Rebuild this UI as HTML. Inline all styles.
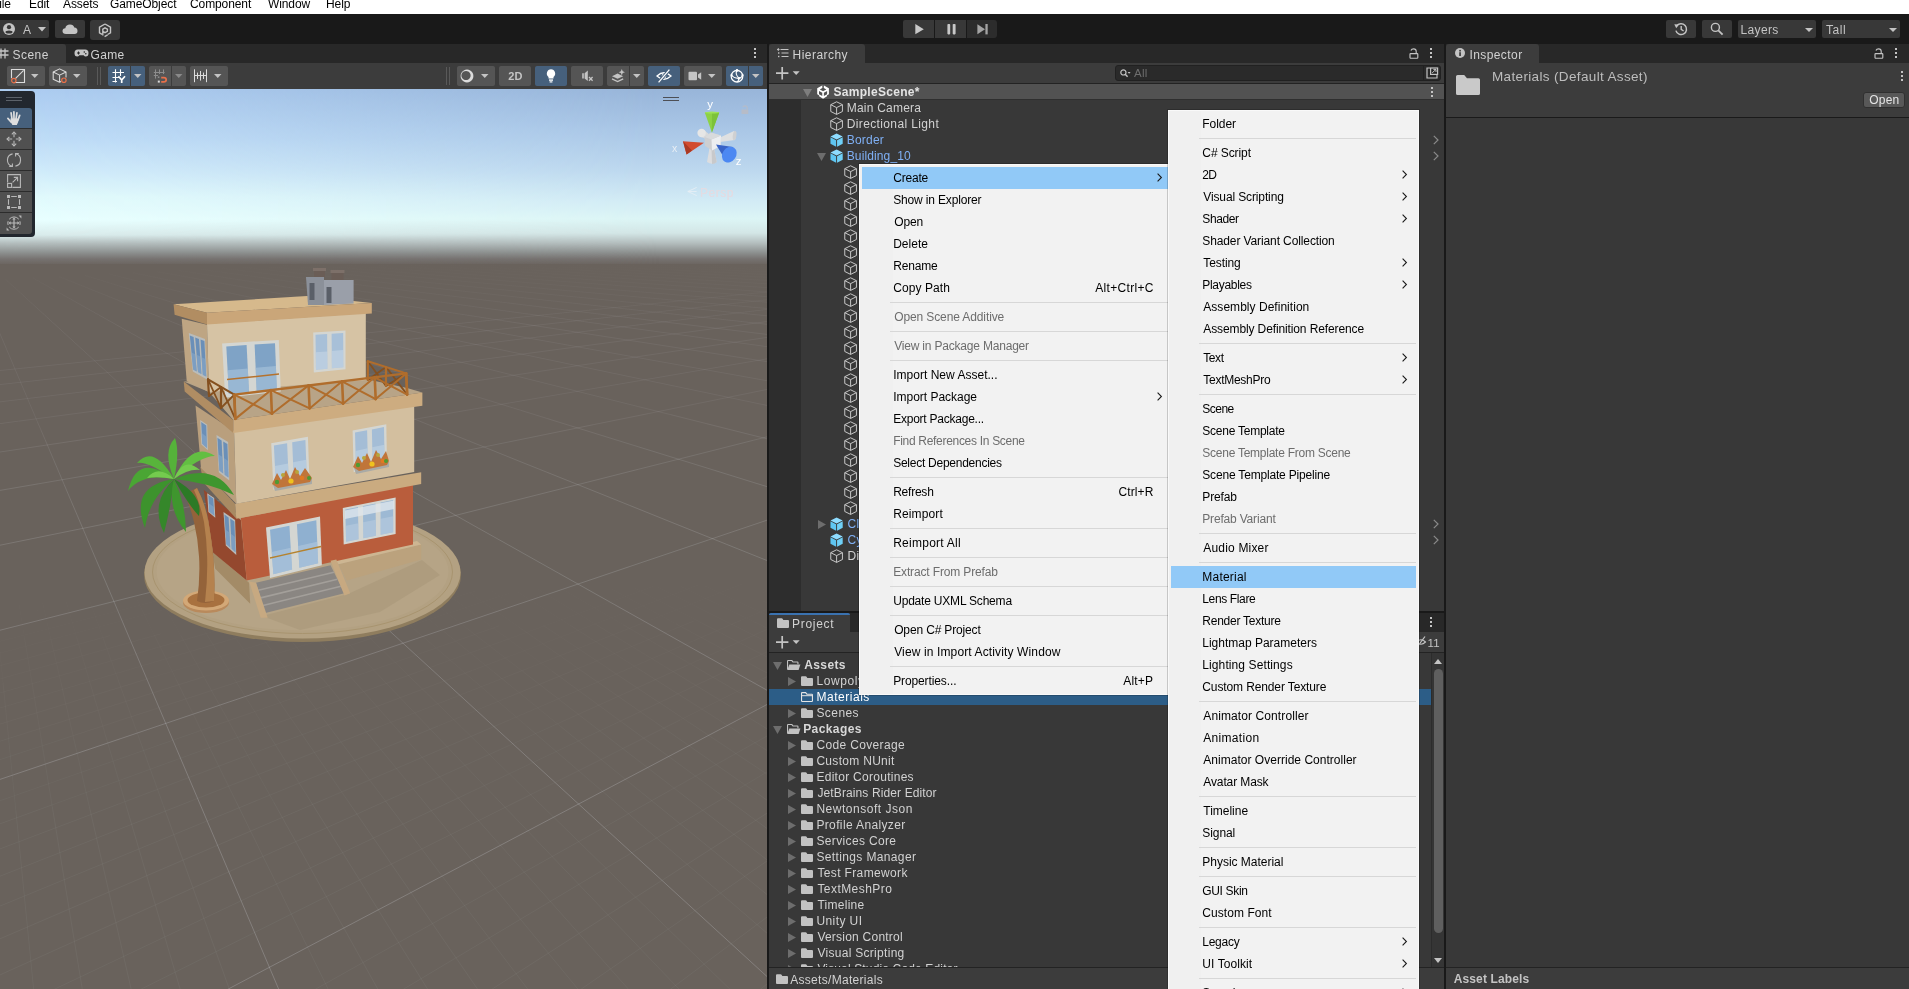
<!DOCTYPE html><html><head><meta charset="utf-8"><title>Unity</title><style>
*{box-sizing:border-box;margin:0;padding:0}
html,body{width:1909px;height:989px;overflow:hidden;background:#191919;font-family:"Liberation Sans",sans-serif;font-size:12px;color:#d2d2d2}
.a{position:absolute}
.t{position:absolute;white-space:pre;line-height:16px;height:16px}
.u{letter-spacing:0.25px}
.b{font-weight:bold}
svg{position:absolute;overflow:visible}
.btn{position:absolute;background:#383838;border-radius:2px}
.tb{position:absolute;background:#555555;border-radius:2px}
.tbon{position:absolute;background:#46607c;border-radius:2px}
.mi{position:absolute;white-space:pre;line-height:22px;height:22px;color:#000;font-size:12px;letter-spacing:-0.1px}
.mi.d{color:#6d6d6d}
.sep{position:absolute;height:1px;background:#d7d7d7}
</style></head><body><div id="root" style="position:absolute;left:0;top:0;width:1909px;height:989px;overflow:hidden;will-change:transform">
<div class="a" style="left:0px;top:0px;width:1909px;height:14px;background:#ffffff;"></div>
<div class="t " style="left:-8px;top:-4px;color:#000;letter-spacing:-0.1px">File</div>
<div class="t " style="left:29px;top:-4px;color:#000;letter-spacing:-0.1px">Edit</div>
<div class="t " style="left:63px;top:-4px;color:#000;letter-spacing:-0.1px">Assets</div>
<div class="t " style="left:110px;top:-4px;color:#000;letter-spacing:-0.1px">GameObject</div>
<div class="t " style="left:190px;top:-4px;color:#000;letter-spacing:-0.1px">Component</div>
<div class="t " style="left:268px;top:-4px;color:#000;letter-spacing:-0.1px">Window</div>
<div class="t " style="left:326px;top:-4px;color:#000;letter-spacing:-0.1px">Help</div>
<div class="a" style="left:0px;top:14px;width:1909px;height:30px;background:#191919;"></div>
<div class="btn" style="left:-3px;top:20px;width:52px;height:18px"></div>
<div class="btn" style="left:55px;top:20px;width:30px;height:18px"></div>
<div class="btn" style="left:90px;top:20px;width:30px;height:20px;border-radius:3px"></div>
<svg style="left:3px;top:23px" width="12" height="12" viewBox="0 0 12 12"><circle cx="6" cy="6" r="6" fill="#c4c4c4"/><circle cx="6" cy="4.2" r="2.1" fill="#383838"/><ellipse cx="6" cy="9" rx="3.5" ry="1.5" fill="#383838"/></svg>
<div class="t " style="left:23px;top:21.5px;color:#c4c4c4">A</div>
<svg style="left:38.0px;top:26.900000000000002px" width="8" height="4.4" viewBox="0 0 8 4.4"><path d="M0 0H8L4.0 4.4Z" fill="#c4c4c4"/></svg>
<svg style="left:62px;top:24px" width="16" height="10" viewBox="0 0 16 10"><path d="M4 10Q0.5 10 0.5 7Q0.5 4.5 3.3 4.2Q4 0.5 8 0.5Q11.5 0.5 12.3 3.6Q15.5 3.8 15.5 7Q15.5 10 12.5 10Z" fill="#c4c4c4"/></svg>
<svg style="left:98px;top:23px" width="14" height="14" viewBox="0 0 14 14"><path d="M7 1L12.5 4.2V9.8L9.6 11.5" fill="none" stroke="#c4c4c4" stroke-width="1.4"/><path d="M7 1L1.5 4.2V9.8L4 11.3" fill="none" stroke="#c4c4c4" stroke-width="1.4"/><path d="M4.8 12.4V6.2L7 4.9L9.4 6.2V8.3L7 9.6L5.2 8.6" fill="none" stroke="#c4c4c4" stroke-width="1.4"/><path d="M6.6 13.6L9.6 11.8" stroke="#c4c4c4" stroke-width="1.4"/></svg>
<div class="a" style="left:903px;top:20px;width:31px;height:18px;background:#383838;border-radius:2px 0 0 2px"></div>
<div class="a" style="left:935px;top:20px;width:31px;height:18px;background:#383838;"></div>
<div class="a" style="left:967px;top:20px;width:30px;height:18px;background:#2c2c2c;border-radius:0 3px 3px 0"></div>
<svg style="left:914.5px;top:23.9px" width="10" height="10.4" viewBox="0 0 10 10.4"><path d="M0.3 0.1V10.3L8.8 5.2Z" fill="#c8c8c8"/></svg>
<svg style="left:946.5px;top:23.9px" width="9" height="10.4" viewBox="0 0 9 10.4"><rect x="0.4" y="0" width="2.8" height="10.4" rx="0.8" fill="#c8c8c8"/><rect x="5.7" y="0" width="2.9" height="10.4" rx="0.8" fill="#c8c8c8"/></svg>
<svg style="left:976.5px;top:24px" width="11" height="10.4" viewBox="0 0 11 10.4"><path d="M0.4 0.2V10.2L8 5.2Z" fill="#a4a4a4"/><rect x="8.4" y="0" width="2.3" height="10.4" fill="#a4a4a4"/></svg>
<div class="btn" style="left:1666px;top:20px;width:30px;height:18px"></div>
<div class="btn" style="left:1702px;top:20px;width:30px;height:18px"></div>
<div class="btn" style="left:1738px;top:20px;width:78px;height:18px"></div>
<div class="btn" style="left:1822px;top:20px;width:78px;height:18px"></div>
<svg style="left:1674px;top:22px" width="14" height="14" viewBox="0 0 14 14"><path d="M2.6 4.2A5.4 5.4 0 1 1 1.9 8.6" fill="none" stroke="#c4c4c4" stroke-width="1.5"/><path d="M0.3 2.2L4.9 2.6L2.2 6.2Z" fill="#c4c4c4"/><path d="M7.2 4V7.4L9.6 9" fill="none" stroke="#c4c4c4" stroke-width="1.4"/></svg>
<svg style="left:1710px;top:22px" width="14" height="14" viewBox="0 0 14 14"><circle cx="5.4" cy="5.4" r="4" fill="none" stroke="#c4c4c4" stroke-width="1.4"/><path d="M8.3 8.3L12.6 12.6" stroke="#c4c4c4" stroke-width="1.8"/></svg>
<div class="t " style="left:1740.4px;top:21.5px;letter-spacing:0.38px;font-size:12px;color:#c4c4c4">Layers</div>
<svg style="left:1804.5px;top:27.5px" width="8" height="4" viewBox="0 0 8 4"><path d="M0 0H8L4.0 4Z" fill="#c4c4c4"/></svg>
<div class="t " style="left:1825.9px;top:21.5px;letter-spacing:0.567px;font-size:12px;color:#c4c4c4">Tall</div>
<svg style="left:1888.5px;top:27.5px" width="8" height="4" viewBox="0 0 8 4"><path d="M0 0H8L4.0 4Z" fill="#c4c4c4"/></svg>
<div class="a" style="left:0px;top:44px;width:767px;height:19px;background:#282828;"></div>
<div class="a" style="left:0px;top:44px;width:66px;height:20px;background:#3c3c3c;border-radius:0 3px 0 0"></div>
<svg style="left:-2px;top:48px" width="11" height="11" viewBox="0 0 11 11"><path d="M3 0.5V10.5M7 0.5V10.5M0 3H10.5M0 7H10.5" stroke="#c4c4c4" stroke-width="1.3" fill="none"/></svg>
<div class="t " style="left:12.6px;top:47px;letter-spacing:0.425px;font-size:12px;">Scene</div>
<svg style="left:74px;top:49px" width="15" height="9" viewBox="0 0 15 9"><path d="M3.8 0.5H11.2Q14.5 0.5 14.5 4Q14.5 7.5 11.8 7.5Q10.5 7.5 9.6 6.3H5.4Q4.5 7.5 3.2 7.5Q0.5 7.5 0.5 4Q0.5 0.5 3.8 0.5Z" fill="#c4c4c4"/><path d="M3 4H6M4.5 2.5V5.5" stroke="#282828" stroke-width="1"/><circle cx="10.3" cy="3" r="0.8" fill="#282828"/><circle cx="11.8" cy="4.8" r="0.8" fill="#282828"/></svg>
<div class="t " style="left:90.6px;top:47px;letter-spacing:0.333px;font-size:12px;">Game</div>
<svg style="left:753.5px;top:48px" width="2" height="10" viewBox="0 0 2 10"><rect x="0" y="0" width="2" height="2" fill="#c4c4c4"/><rect x="0" y="4" width="2" height="2" fill="#c4c4c4"/><rect x="0" y="8" width="2" height="2" fill="#c4c4c4"/></svg>
<div class="a" style="left:0px;top:63px;width:767px;height:26px;background:#3c3c3c;"></div>
<div class="tb" style="left:7px;top:66px;width:38px;height:20px"></div>
<div class="tb" style="left:49px;top:66px;width:38px;height:20px"></div>
<div class="a" style="left:97px;top:67px;width:1px;height:18px;background:#595959;"></div>
<div class="a" style="left:100px;top:67px;width:1px;height:18px;background:#595959;"></div>
<div class="tbon" style="left:108px;top:66px;width:37px;height:20px"></div><div class="a" style="left:130px;top:66px;width:1px;height:20px;background:#3c3c3c;"></div>
<div class="tb" style="left:149px;top:66px;width:37px;height:20px"></div><div class="a" style="left:171px;top:66px;width:1px;height:20px;background:#3c3c3c;"></div>
<div class="tb" style="left:190px;top:66px;width:38px;height:20px"></div>
<div class="a" style="left:446px;top:67px;width:1px;height:18px;background:#595959;"></div>
<div class="a" style="left:449px;top:67px;width:1px;height:18px;background:#595959;"></div>
<div class="tb" style="left:457px;top:66px;width:38px;height:20px"></div>
<div class="tb" style="left:499px;top:66px;width:32px;height:20px"></div>
<div class="tbon" style="left:535px;top:66px;width:32px;height:20px"></div>
<div class="tb" style="left:571px;top:66px;width:32px;height:20px"></div>
<div class="tb" style="left:607px;top:66px;width:37px;height:20px"></div><div class="a" style="left:629px;top:66px;width:1px;height:20px;background:#3c3c3c;"></div>
<div class="tbon" style="left:648px;top:66px;width:32px;height:20px"></div>
<div class="tb" style="left:684px;top:66px;width:38px;height:20px"></div>
<div class="tbon" style="left:726px;top:66px;width:37px;height:20px"></div><div class="a" style="left:748px;top:66px;width:1px;height:20px;background:#3c3c3c;"></div>
<svg style="left:10px;top:68px" width="16" height="16" viewBox="0 0 16 16"><path d="M4.4 14.5H14.5V1.5H1.5V10.2" fill="none" stroke="#dcdcdc" stroke-width="1.1"/><path d="M5.4 10.6L13.6 2.4" stroke="#dcdcdc" stroke-width="1.1"/><circle cx="3.8" cy="12.6" r="2.2" fill="none" stroke="#e8704a" stroke-width="1.2"/></svg>
<svg style="left:31.25px;top:74.3px" width="7.5" height="4" viewBox="0 0 7.5 4"><path d="M0 0H7.5L3.75 4Z" fill="#c4c4c4"/></svg>
<svg style="left:52px;top:68px" width="16" height="16" viewBox="0 0 16 16"><path d="M9.2 13.6L7.6 14.3L1.2 11.2V4L7.6 0.9L14 4V9.6M1.2 4L7.6 7.1L14 4M7.6 7.1V14.3" fill="none" stroke="#dcdcdc" stroke-width="1.05" stroke-linejoin="round"/><circle cx="11.9" cy="12.2" r="2.2" fill="none" stroke="#e8704a" stroke-width="1.2"/></svg>
<svg style="left:73.25px;top:74.3px" width="7.5" height="4" viewBox="0 0 7.5 4"><path d="M0 0H7.5L3.75 4Z" fill="#c4c4c4"/></svg>
<svg style="left:112px;top:68px" width="15" height="16" viewBox="0 0 15 16"><path d="M0.5 4.5H12M0.5 9.5H7.4M0.5 13.5H5M3.5 1.2V14.6M8.5 1.2V8" stroke="#fff" stroke-width="1.1" fill="none"/><path d="M6.4 8.2L9.7 12V15M13 8.2L9.7 12" stroke="#fff" stroke-width="1.7" fill="none"/></svg>
<svg style="left:134.25px;top:74.3px" width="7.5" height="4" viewBox="0 0 7.5 4"><path d="M0 0H7.5L3.75 4Z" fill="#c4c4c4"/></svg>
<svg style="left:153px;top:68px" width="15" height="16" viewBox="0 0 15 16"><path d="M0.8 4.5H11.6M0.8 7.5H5M2.5 1.4V10.6M6.5 1.4V6M10.5 1.4V6" stroke="#8c8c8c" stroke-width="1" fill="none"/><rect x="4.8" y="12.6" width="2" height="2" fill="#dcdcdc"/><rect x="4.8" y="8.4" width="1.6" height="1.6" fill="#8c8c8c"/><path d="M8.2 9.6H10.8Q13.2 9.6 13.2 11.7Q13.2 13.8 10.8 13.8H8.2" stroke="#e8704a" stroke-width="1.7" fill="none"/></svg>
<svg style="left:175.25px;top:74.3px" width="7.5" height="4" viewBox="0 0 7.5 4"><path d="M0 0H7.5L3.75 4Z" fill="#8a8a8a"/></svg>
<svg style="left:194px;top:69px" width="14" height="14" viewBox="0 0 14 14"><path d="M0.5 0.3V13.2M12.5 0.3V13.2M3.5 3.6V10M6.5 2V11.6M9.5 3.6V10M0.5 6.5H12.5" stroke="#dcdcdc" stroke-width="1" fill="none"/></svg>
<svg style="left:214.25px;top:74.3px" width="7.5" height="4" viewBox="0 0 7.5 4"><path d="M0 0H7.5L3.75 4Z" fill="#c4c4c4"/></svg>
<svg style="left:460px;top:69px" width="14" height="14" viewBox="0 0 14 14"><path fill-rule="evenodd" d="M7 0.6A6.4 6.4 0 1 1 6.99 0.6ZM6 1.9A4.6 4.6 0 1 0 6.01 1.9Z" fill="#dcdcdc"/></svg>
<svg style="left:481.25px;top:74.3px" width="7.5" height="4" viewBox="0 0 7.5 4"><path d="M0 0H7.5L3.75 4Z" fill="#c4c4c4"/></svg>
<div class="t b" style="left:508.2px;top:67.5px;color:#c4c4c4;font-size:11px;letter-spacing:0.2px">2D</div>
<svg style="left:546px;top:69px" width="10" height="14" viewBox="0 0 10 14"><path d="M5 0.3A4.3 4.3 0 0 1 7.5 8V9.6H2.5V8A4.3 4.3 0 0 1 5 0.3Z" fill="#fff"/><rect x="3" y="10.4" width="4" height="1.4" fill="#fff"/><rect x="3.6" y="12.3" width="2.8" height="1.2" fill="#fff"/></svg>
<svg style="left:581px;top:70px" width="13" height="12" viewBox="0 0 13 12"><path d="M1.2 3.2H2.8V8.4H1.2Z" fill="#c4c4c4"/><path d="M3.6 3.2L6.8 0.6V11L3.6 8.4Z" fill="#c4c4c4"/><path d="M8 7L11.6 10.8M11.6 7L8 10.8" stroke="#c4c4c4" stroke-width="1.3"/></svg>
<svg style="left:611px;top:69px" width="15" height="14" viewBox="0 0 15 14"><path d="M1 7.2L6.6 4.6L12.2 7.2L6.6 9.8Z" fill="#c4c4c4"/><path d="M1 9.8L6.6 12.6L12.2 9.8" fill="none" stroke="#c4c4c4" stroke-width="1.3"/><path d="M10.8 0L11.7 2.3L14 3.2L11.7 4.1L10.8 6.4L9.9 4.1L7.6 3.2L9.9 2.3Z" fill="#c4c4c4"/></svg>
<svg style="left:633.25px;top:74.3px" width="7.5" height="4" viewBox="0 0 7.5 4"><path d="M0 0H7.5L3.75 4Z" fill="#c4c4c4"/></svg>
<svg style="left:656px;top:69px" width="16" height="14" viewBox="0 0 16 14"><path d="M1 7Q8 0.5 15 7Q8 13.5 1 7Z" fill="none" stroke="#fff" stroke-width="1.3"/><circle cx="8" cy="7" r="2.3" fill="#fff"/><path d="M3 13L13 1" stroke="#46607c" stroke-width="3.2"/><path d="M2.6 13.4L13.4 0.6" stroke="#fff" stroke-width="1.3"/></svg>
<svg style="left:688px;top:71px" width="14" height="10" viewBox="0 0 14 10"><rect x="0.5" y="0.8" width="8.5" height="8.4" rx="1" fill="#c4c4c4"/><path d="M10 3.6L13.2 1.2V8.8L10 6.4Z" fill="#c4c4c4"/></svg>
<svg style="left:708.25px;top:74.3px" width="7.5" height="4" viewBox="0 0 7.5 4"><path d="M0 0H7.5L3.75 4Z" fill="#c4c4c4"/></svg>
<svg style="left:730px;top:69px" width="14" height="14" viewBox="0 0 14 14"><circle cx="7" cy="7.2" r="5.8" fill="none" stroke="#fff" stroke-width="1.3"/><path d="M1.4 6Q4 9.6 9 9.2Q12 8.6 12.6 6M7 1.4Q4.6 5 9 9.2Q8.6 11.6 7.4 13" fill="none" stroke="#fff" stroke-width="1.1"/><circle cx="7" cy="1.4" r="1.3" fill="#fff"/><circle cx="9" cy="9.2" r="1.3" fill="#fff"/><circle cx="1.6" cy="6.2" r="1.1" fill="#fff"/><circle cx="12.5" cy="6.2" r="1.1" fill="#fff"/></svg>
<svg style="left:752.25px;top:74.3px" width="7.5" height="4" viewBox="0 0 7.5 4"><path d="M0 0H7.5L3.75 4Z" fill="#c4c4c4"/></svg>
<div class="a" style="left:0;top:89px;width:767px;height:900px;overflow:hidden;background:#69625c">
<div class="a" style="left:0;top:0;width:767px;height:176px;background:linear-gradient(to bottom,#98b5d9 0px,#a9c6e6 40px,#bcd7ee 80px,#d2ebf5 112px,#dcf5f5 130px,#d3e6e6 144px,#b4bebe 154px,#8f9392 163px,#767270 170px,#69625c 177px)"></div>
<div class="a" style="left:0;top:0;width:767px;height:176px;background:linear-gradient(to bottom,#acccf0 0px,#bedcf7 49px,#d0ebfa 82px,#e1fafc 108px,#e8ffff 131px,#d9ebeb 146px,#b4bebe 154px,#8f9392 163px,#767270 170px,#69625c 177px);-webkit-mask-image:linear-gradient(to right,#000 0,rgba(0,0,0,.85) 150px,transparent 660px);mask-image:linear-gradient(to right,#000 0,rgba(0,0,0,.85) 150px,transparent 660px)"></div>
<svg style="left:0;top:-89px" width="767" height="989" viewBox="0 0 767 989"><line x1="-283.9" y1="293.5" x2="-299.5" y2="297.2" stroke="#eef6ff" stroke-width="0.85" stroke-opacity="0.07"/><line x1="-292.7" y1="400.5" x2="1034.2" y2="264.6" stroke="#eef6ff" stroke-width="0.85" stroke-opacity="0.07"/><line x1="-247.1" y1="291.7" x2="-300.0" y2="306.0" stroke="#eef6ff" stroke-width="0.85" stroke-opacity="0.07"/><line x1="-293.2" y1="417.0" x2="1076.6" y2="265.5" stroke="#eef6ff" stroke-width="0.85" stroke-opacity="0.07"/><line x1="-211.6" y1="289.9" x2="-299.8" y2="317.8" stroke="#eef6ff" stroke-width="0.85" stroke-opacity="0.07"/><line x1="-293.7" y1="437.2" x2="-210.2" y2="427.2" stroke="#eef6ff" stroke-width="0.85" stroke-opacity="0.08"/><line x1="-210.2" y1="427.2" x2="1099.6" y2="269.3" stroke="#eef6ff" stroke-width="0.85" stroke-opacity="0.07"/><line x1="-177.3" y1="288.2" x2="-299.4" y2="334.9" stroke="#eef6ff" stroke-width="0.85" stroke-opacity="0.07"/><line x1="-294.5" y1="462.8" x2="-234.7" y2="454.9" stroke="#eef6ff" stroke-width="0.85" stroke-opacity="0.11"/><line x1="-234.7" y1="454.9" x2="-135.5" y2="441.7" stroke="#eef6ff" stroke-width="0.85" stroke-opacity="0.10"/><line x1="-135.5" y1="441.7" x2="-55.3" y2="431.0" stroke="#eef6ff" stroke-width="0.85" stroke-opacity="0.09"/><line x1="-55.3" y1="431.0" x2="18.3" y2="421.2" stroke="#eef6ff" stroke-width="0.85" stroke-opacity="0.08"/><line x1="18.3" y1="421.2" x2="1099.8" y2="277.3" stroke="#eef6ff" stroke-width="0.85" stroke-opacity="0.07"/><line x1="-144.2" y1="286.6" x2="-298.9" y2="362.3" stroke="#eef6ff" stroke-width="0.85" stroke-opacity="0.07"/><line x1="-295.4" y1="496.1" x2="-267.4" y2="491.9" stroke="#eef6ff" stroke-width="0.85" stroke-opacity="0.14"/><line x1="-267.4" y1="491.9" x2="-150.5" y2="474.5" stroke="#eef6ff" stroke-width="0.85" stroke-opacity="0.13"/><line x1="-150.5" y1="474.5" x2="-57.4" y2="460.6" stroke="#eef6ff" stroke-width="0.85" stroke-opacity="0.12"/><line x1="-57.4" y1="460.6" x2="26.9" y2="448.0" stroke="#eef6ff" stroke-width="0.85" stroke-opacity="0.11"/><line x1="26.9" y1="448.0" x2="103.7" y2="436.5" stroke="#eef6ff" stroke-width="0.85" stroke-opacity="0.10"/><line x1="103.7" y1="436.5" x2="173.8" y2="426.0" stroke="#eef6ff" stroke-width="0.85" stroke-opacity="0.09"/><line x1="173.8" y1="426.0" x2="245.9" y2="415.2" stroke="#eef6ff" stroke-width="0.85" stroke-opacity="0.08"/><line x1="245.9" y1="415.2" x2="1100.0" y2="287.7" stroke="#eef6ff" stroke-width="0.85" stroke-opacity="0.07"/><line x1="-112.3" y1="285.0" x2="-297.9" y2="412.7" stroke="#eef6ff" stroke-width="0.85" stroke-opacity="0.07"/><line x1="-296.7" y1="541.2" x2="-171.2" y2="519.7" stroke="#eef6ff" stroke-width="0.85" stroke-opacity="0.16"/><line x1="-171.2" y1="519.7" x2="-60.2" y2="500.7" stroke="#eef6ff" stroke-width="0.85" stroke-opacity="0.15"/><line x1="-60.2" y1="500.7" x2="38.5" y2="483.8" stroke="#eef6ff" stroke-width="0.85" stroke-opacity="0.14"/><line x1="38.5" y1="483.8" x2="126.9" y2="468.6" stroke="#eef6ff" stroke-width="0.85" stroke-opacity="0.13"/><line x1="126.9" y1="468.6" x2="206.6" y2="454.9" stroke="#eef6ff" stroke-width="0.85" stroke-opacity="0.12"/><line x1="206.6" y1="454.9" x2="287.3" y2="441.1" stroke="#eef6ff" stroke-width="0.85" stroke-opacity="0.11"/><line x1="287.3" y1="441.1" x2="352.2" y2="430.0" stroke="#eef6ff" stroke-width="0.85" stroke-opacity="0.10"/><line x1="352.2" y1="430.0" x2="411.6" y2="419.8" stroke="#eef6ff" stroke-width="0.85" stroke-opacity="0.09"/><line x1="411.6" y1="419.8" x2="466.0" y2="410.4" stroke="#eef6ff" stroke-width="0.85" stroke-opacity="0.08"/><line x1="466.0" y1="410.4" x2="1098.6" y2="302.0" stroke="#eef6ff" stroke-width="0.85" stroke-opacity="0.07"/><line x1="-81.4" y1="283.4" x2="-204.3" y2="428.6" stroke="#eef6ff" stroke-width="0.85" stroke-opacity="0.07"/><line x1="-204.3" y1="428.6" x2="-210.5" y2="435.9" stroke="#eef6ff" stroke-width="0.85" stroke-opacity="0.08"/><line x1="-210.5" y1="435.9" x2="-219.0" y2="445.9" stroke="#eef6ff" stroke-width="0.85" stroke-opacity="0.09"/><line x1="-219.0" y1="445.9" x2="-228.4" y2="457.0" stroke="#eef6ff" stroke-width="0.85" stroke-opacity="0.10"/><line x1="-228.4" y1="457.0" x2="-236.7" y2="466.8" stroke="#eef6ff" stroke-width="0.85" stroke-opacity="0.11"/><line x1="-236.7" y1="466.8" x2="-248.1" y2="480.2" stroke="#eef6ff" stroke-width="0.85" stroke-opacity="0.12"/><line x1="-248.1" y1="480.2" x2="-258.2" y2="492.2" stroke="#eef6ff" stroke-width="0.85" stroke-opacity="0.13"/><line x1="-258.2" y1="492.2" x2="-272.3" y2="508.9" stroke="#eef6ff" stroke-width="0.85" stroke-opacity="0.14"/><line x1="-272.3" y1="508.9" x2="-288.5" y2="528.0" stroke="#eef6ff" stroke-width="0.85" stroke-opacity="0.15"/><line x1="-288.5" y1="528.0" x2="-299.3" y2="540.7" stroke="#eef6ff" stroke-width="0.85" stroke-opacity="0.16"/><line x1="-298.5" y1="605.9" x2="-201.6" y2="586.2" stroke="#eef6ff" stroke-width="0.85" stroke-opacity="0.19"/><line x1="-201.6" y1="586.2" x2="-64.3" y2="558.3" stroke="#eef6ff" stroke-width="0.85" stroke-opacity="0.18"/><line x1="-64.3" y1="558.3" x2="54.7" y2="534.1" stroke="#eef6ff" stroke-width="0.85" stroke-opacity="0.17"/><line x1="54.7" y1="534.1" x2="159.1" y2="512.9" stroke="#eef6ff" stroke-width="0.85" stroke-opacity="0.16"/><line x1="159.1" y1="512.9" x2="251.2" y2="494.2" stroke="#eef6ff" stroke-width="0.85" stroke-opacity="0.15"/><line x1="251.2" y1="494.2" x2="342.8" y2="475.6" stroke="#eef6ff" stroke-width="0.85" stroke-opacity="0.14"/><line x1="342.8" y1="475.6" x2="415.2" y2="460.9" stroke="#eef6ff" stroke-width="0.85" stroke-opacity="0.13"/><line x1="415.2" y1="460.9" x2="480.4" y2="447.7" stroke="#eef6ff" stroke-width="0.85" stroke-opacity="0.12"/><line x1="480.4" y1="447.7" x2="539.5" y2="435.7" stroke="#eef6ff" stroke-width="0.85" stroke-opacity="0.11"/><line x1="539.5" y1="435.7" x2="593.3" y2="424.7" stroke="#eef6ff" stroke-width="0.85" stroke-opacity="0.10"/><line x1="593.3" y1="424.7" x2="648.4" y2="413.6" stroke="#eef6ff" stroke-width="0.85" stroke-opacity="0.09"/><line x1="648.4" y1="413.6" x2="693.0" y2="404.5" stroke="#eef6ff" stroke-width="0.85" stroke-opacity="0.08"/><line x1="693.0" y1="404.5" x2="1098.6" y2="322.1" stroke="#eef6ff" stroke-width="0.85" stroke-opacity="0.07"/><line x1="-296.0" y1="613.3" x2="-275.7" y2="609.1" stroke="#eef6ff" stroke-width="0.85" stroke-opacity="0.01"/><line x1="-298.3" y1="622.2" x2="-229.4" y2="607.6" stroke="#eef6ff" stroke-width="0.85" stroke-opacity="0.01"/><line x1="-288.4" y1="609.8" x2="-299.2" y2="626.2" stroke="#eef6ff" stroke-width="0.85" stroke-opacity="0.01"/><line x1="-296.5" y1="630.5" x2="-187.0" y2="606.9" stroke="#eef6ff" stroke-width="0.85" stroke-opacity="0.01"/><line x1="-264.9" y1="609.5" x2="-287.3" y2="646.9" stroke="#eef6ff" stroke-width="0.85" stroke-opacity="0.01"/><line x1="-287.3" y1="646.9" x2="-299.2" y2="666.7" stroke="#eef6ff" stroke-width="0.85" stroke-opacity="0.02"/><line x1="-299.0" y1="640.2" x2="-140.8" y2="605.4" stroke="#eef6ff" stroke-width="0.85" stroke-opacity="0.01"/><line x1="-241.4" y1="609.2" x2="-261.4" y2="646.5" stroke="#eef6ff" stroke-width="0.85" stroke-opacity="0.01"/><line x1="-261.4" y1="646.5" x2="-284.9" y2="690.2" stroke="#eef6ff" stroke-width="0.85" stroke-opacity="0.02"/><line x1="-284.9" y1="690.2" x2="-299.1" y2="716.8" stroke="#eef6ff" stroke-width="0.85" stroke-opacity="0.03"/><line x1="-297.1" y1="649.4" x2="-279.3" y2="645.3" stroke="#eef6ff" stroke-width="0.85" stroke-opacity="0.02"/><line x1="-279.3" y1="645.3" x2="-98.3" y2="604.7" stroke="#eef6ff" stroke-width="0.85" stroke-opacity="0.01"/><line x1="-217.9" y1="608.9" x2="-234.8" y2="644.6" stroke="#eef6ff" stroke-width="0.85" stroke-opacity="0.01"/><line x1="-234.8" y1="644.6" x2="-256.3" y2="689.9" stroke="#eef6ff" stroke-width="0.85" stroke-opacity="0.02"/><line x1="-256.3" y1="689.9" x2="-283.0" y2="746.4" stroke="#eef6ff" stroke-width="0.85" stroke-opacity="0.03"/><line x1="-283.0" y1="746.4" x2="-299.1" y2="780.4" stroke="#eef6ff" stroke-width="0.85" stroke-opacity="0.04"/><line x1="-299.7" y1="660.0" x2="-228.4" y2="643.6" stroke="#eef6ff" stroke-width="0.85" stroke-opacity="0.02"/><line x1="-228.4" y1="643.6" x2="-52.2" y2="603.2" stroke="#eef6ff" stroke-width="0.85" stroke-opacity="0.01"/><line x1="-194.3" y1="608.6" x2="-209.0" y2="644.3" stroke="#eef6ff" stroke-width="0.85" stroke-opacity="0.01"/><line x1="-209.0" y1="644.3" x2="-227.6" y2="689.6" stroke="#eef6ff" stroke-width="0.85" stroke-opacity="0.02"/><line x1="-227.6" y1="689.6" x2="-249.8" y2="743.7" stroke="#eef6ff" stroke-width="0.85" stroke-opacity="0.03"/><line x1="-249.8" y1="743.7" x2="-279.4" y2="815.7" stroke="#eef6ff" stroke-width="0.85" stroke-opacity="0.04"/><line x1="-279.4" y1="815.7" x2="-299.0" y2="863.5" stroke="#eef6ff" stroke-width="0.85" stroke-opacity="0.05"/><line x1="-297.7" y1="670.1" x2="-181.8" y2="642.9" stroke="#eef6ff" stroke-width="0.85" stroke-opacity="0.02"/><line x1="-181.8" y1="642.9" x2="-9.7" y2="602.5" stroke="#eef6ff" stroke-width="0.85" stroke-opacity="0.01"/><line x1="-170.3" y1="606.9" x2="-183.1" y2="644.0" stroke="#eef6ff" stroke-width="0.85" stroke-opacity="0.01"/><line x1="-183.1" y1="644.0" x2="-198.9" y2="689.2" stroke="#eef6ff" stroke-width="0.85" stroke-opacity="0.02"/><line x1="-198.9" y1="689.2" x2="-217.7" y2="743.4" stroke="#eef6ff" stroke-width="0.85" stroke-opacity="0.03"/><line x1="-217.7" y1="743.4" x2="-242.7" y2="815.4" stroke="#eef6ff" stroke-width="0.85" stroke-opacity="0.04"/><line x1="-242.7" y1="815.4" x2="-298.9" y2="977.2" stroke="#eef6ff" stroke-width="0.85" stroke-opacity="0.05"/><line x1="-295.7" y1="680.7" x2="-131.1" y2="641.2" stroke="#eef6ff" stroke-width="0.85" stroke-opacity="0.02"/><line x1="-131.1" y1="641.2" x2="36.3" y2="601.0" stroke="#eef6ff" stroke-width="0.85" stroke-opacity="0.01"/><line x1="-146.7" y1="606.6" x2="-157.2" y2="643.6" stroke="#eef6ff" stroke-width="0.85" stroke-opacity="0.01"/><line x1="-157.2" y1="643.6" x2="-169.6" y2="687.0" stroke="#eef6ff" stroke-width="0.85" stroke-opacity="0.02"/><line x1="-169.6" y1="687.0" x2="-185.5" y2="743.1" stroke="#eef6ff" stroke-width="0.85" stroke-opacity="0.03"/><line x1="-185.5" y1="743.1" x2="-206.0" y2="815.1" stroke="#eef6ff" stroke-width="0.85" stroke-opacity="0.04"/><line x1="-206.0" y1="815.1" x2="-298.8" y2="1141.7" stroke="#eef6ff" stroke-width="0.85" stroke-opacity="0.05"/><line x1="-298.4" y1="693.1" x2="-283.6" y2="689.5" stroke="#eef6ff" stroke-width="0.85" stroke-opacity="0.03"/><line x1="-283.6" y1="689.5" x2="-84.5" y2="640.5" stroke="#eef6ff" stroke-width="0.85" stroke-opacity="0.02"/><line x1="-84.5" y1="640.5" x2="79.0" y2="600.3" stroke="#eef6ff" stroke-width="0.85" stroke-opacity="0.01"/><line x1="-51.5" y1="281.9" x2="-83.1" y2="424.9" stroke="#eef6ff" stroke-width="0.85" stroke-opacity="0.07"/><line x1="-83.1" y1="424.9" x2="-85.1" y2="434.0" stroke="#eef6ff" stroke-width="0.85" stroke-opacity="0.08"/><line x1="-85.1" y1="434.0" x2="-86.8" y2="441.9" stroke="#eef6ff" stroke-width="0.85" stroke-opacity="0.09"/><line x1="-86.8" y1="441.9" x2="-89.2" y2="452.7" stroke="#eef6ff" stroke-width="0.85" stroke-opacity="0.10"/><line x1="-89.2" y1="452.7" x2="-91.9" y2="464.7" stroke="#eef6ff" stroke-width="0.85" stroke-opacity="0.11"/><line x1="-91.9" y1="464.7" x2="-94.2" y2="475.4" stroke="#eef6ff" stroke-width="0.85" stroke-opacity="0.12"/><line x1="-94.2" y1="475.4" x2="-97.5" y2="490.1" stroke="#eef6ff" stroke-width="0.85" stroke-opacity="0.13"/><line x1="-97.5" y1="490.1" x2="-100.4" y2="503.3" stroke="#eef6ff" stroke-width="0.85" stroke-opacity="0.14"/><line x1="-100.4" y1="503.3" x2="-104.5" y2="521.9" stroke="#eef6ff" stroke-width="0.85" stroke-opacity="0.15"/><line x1="-104.5" y1="521.9" x2="-109.2" y2="543.2" stroke="#eef6ff" stroke-width="0.85" stroke-opacity="0.16"/><line x1="-109.2" y1="543.2" x2="-113.5" y2="562.7" stroke="#eef6ff" stroke-width="0.85" stroke-opacity="0.17"/><line x1="-113.5" y1="562.7" x2="-119.7" y2="590.9" stroke="#eef6ff" stroke-width="0.85" stroke-opacity="0.18"/><line x1="-119.7" y1="590.9" x2="-125.5" y2="617.1" stroke="#eef6ff" stroke-width="0.85" stroke-opacity="0.19"/><line x1="-125.5" y1="617.1" x2="-134.1" y2="656.0" stroke="#eef6ff" stroke-width="0.85" stroke-opacity="0.20"/><line x1="-134.1" y1="656.0" x2="-144.6" y2="703.7" stroke="#eef6ff" stroke-width="0.85" stroke-opacity="0.21"/><line x1="-144.6" y1="703.7" x2="-155.0" y2="750.5" stroke="#eef6ff" stroke-width="0.85" stroke-opacity="0.22"/><line x1="-155.0" y1="750.5" x2="-171.2" y2="824.0" stroke="#eef6ff" stroke-width="0.85" stroke-opacity="0.23"/><line x1="-171.2" y1="824.0" x2="-268.6" y2="1265.1" stroke="#eef6ff" stroke-width="0.85" stroke-opacity="0.24"/><line x1="-275.7" y1="699.7" x2="-250.7" y2="693.4" stroke="#eef6ff" stroke-width="0.85" stroke-opacity="0.22"/><line x1="-250.7" y1="693.4" x2="-70.7" y2="648.1" stroke="#eef6ff" stroke-width="0.85" stroke-opacity="0.21"/><line x1="-70.7" y1="648.1" x2="79.3" y2="610.2" stroke="#eef6ff" stroke-width="0.85" stroke-opacity="0.20"/><line x1="79.3" y1="610.2" x2="206.4" y2="578.2" stroke="#eef6ff" stroke-width="0.85" stroke-opacity="0.19"/><line x1="206.4" y1="578.2" x2="315.3" y2="550.8" stroke="#eef6ff" stroke-width="0.85" stroke-opacity="0.18"/><line x1="315.3" y1="550.8" x2="420.7" y2="524.2" stroke="#eef6ff" stroke-width="0.85" stroke-opacity="0.17"/><line x1="420.7" y1="524.2" x2="502.1" y2="503.7" stroke="#eef6ff" stroke-width="0.85" stroke-opacity="0.16"/><line x1="502.1" y1="503.7" x2="574.0" y2="485.6" stroke="#eef6ff" stroke-width="0.85" stroke-opacity="0.15"/><line x1="574.0" y1="485.6" x2="637.9" y2="469.4" stroke="#eef6ff" stroke-width="0.85" stroke-opacity="0.14"/><line x1="637.9" y1="469.4" x2="695.2" y2="455.0" stroke="#eef6ff" stroke-width="0.85" stroke-opacity="0.13"/><line x1="695.2" y1="455.0" x2="752.9" y2="440.4" stroke="#eef6ff" stroke-width="0.85" stroke-opacity="0.12"/><line x1="752.9" y1="440.4" x2="799.1" y2="428.8" stroke="#eef6ff" stroke-width="0.85" stroke-opacity="0.11"/><line x1="799.1" y1="428.8" x2="841.2" y2="418.2" stroke="#eef6ff" stroke-width="0.85" stroke-opacity="0.10"/><line x1="841.2" y1="418.2" x2="879.6" y2="408.5" stroke="#eef6ff" stroke-width="0.85" stroke-opacity="0.09"/><line x1="879.6" y1="408.5" x2="914.9" y2="399.6" stroke="#eef6ff" stroke-width="0.85" stroke-opacity="0.08"/><line x1="914.9" y1="399.6" x2="1098.6" y2="353.3" stroke="#eef6ff" stroke-width="0.85" stroke-opacity="0.07"/><line x1="-99.5" y1="606.0" x2="-105.1" y2="641.4" stroke="#eef6ff" stroke-width="0.85" stroke-opacity="0.01"/><line x1="-105.1" y1="641.4" x2="-112.1" y2="686.3" stroke="#eef6ff" stroke-width="0.85" stroke-opacity="0.02"/><line x1="-112.1" y1="686.3" x2="-121.0" y2="742.4" stroke="#eef6ff" stroke-width="0.85" stroke-opacity="0.03"/><line x1="-121.0" y1="742.4" x2="-131.8" y2="811.4" stroke="#eef6ff" stroke-width="0.85" stroke-opacity="0.04"/><line x1="-131.8" y1="811.4" x2="-208.0" y2="1296.5" stroke="#eef6ff" stroke-width="0.85" stroke-opacity="0.05"/><line x1="-299.2" y1="718.7" x2="-175.6" y2="686.7" stroke="#eef6ff" stroke-width="0.85" stroke-opacity="0.03"/><line x1="-175.6" y1="686.7" x2="12.9" y2="638.0" stroke="#eef6ff" stroke-width="0.85" stroke-opacity="0.02"/><line x1="12.9" y1="638.0" x2="167.6" y2="598.1" stroke="#eef6ff" stroke-width="0.85" stroke-opacity="0.01"/><line x1="-75.9" y1="605.6" x2="-79.2" y2="641.1" stroke="#eef6ff" stroke-width="0.85" stroke-opacity="0.01"/><line x1="-79.2" y1="641.1" x2="-83.4" y2="686.0" stroke="#eef6ff" stroke-width="0.85" stroke-opacity="0.02"/><line x1="-83.4" y1="686.0" x2="-88.4" y2="739.7" stroke="#eef6ff" stroke-width="0.85" stroke-opacity="0.03"/><line x1="-88.4" y1="739.7" x2="-95.0" y2="811.1" stroke="#eef6ff" stroke-width="0.85" stroke-opacity="0.04"/><line x1="-95.0" y1="811.1" x2="-140.3" y2="1296.9" stroke="#eef6ff" stroke-width="0.85" stroke-opacity="0.05"/><line x1="-297.0" y1="731.9" x2="-119.3" y2="684.8" stroke="#eef6ff" stroke-width="0.85" stroke-opacity="0.03"/><line x1="-119.3" y1="684.8" x2="63.4" y2="636.3" stroke="#eef6ff" stroke-width="0.85" stroke-opacity="0.02"/><line x1="63.4" y1="636.3" x2="210.3" y2="597.3" stroke="#eef6ff" stroke-width="0.85" stroke-opacity="0.01"/><line x1="-52.1" y1="604.0" x2="-53.2" y2="640.8" stroke="#eef6ff" stroke-width="0.85" stroke-opacity="0.01"/><line x1="-53.2" y1="640.8" x2="-54.5" y2="685.7" stroke="#eef6ff" stroke-width="0.85" stroke-opacity="0.02"/><line x1="-54.5" y1="685.7" x2="-56.1" y2="739.4" stroke="#eef6ff" stroke-width="0.85" stroke-opacity="0.03"/><line x1="-56.1" y1="739.4" x2="-58.2" y2="810.8" stroke="#eef6ff" stroke-width="0.85" stroke-opacity="0.04"/><line x1="-58.2" y1="810.8" x2="-72.3" y2="1297.3" stroke="#eef6ff" stroke-width="0.85" stroke-opacity="0.05"/><line x1="-294.6" y1="745.9" x2="-289.0" y2="744.4" stroke="#eef6ff" stroke-width="0.85" stroke-opacity="0.04"/><line x1="-289.0" y1="744.4" x2="-67.5" y2="684.0" stroke="#eef6ff" stroke-width="0.85" stroke-opacity="0.03"/><line x1="-67.5" y1="684.0" x2="110.3" y2="635.6" stroke="#eef6ff" stroke-width="0.85" stroke-opacity="0.02"/><line x1="110.3" y1="635.6" x2="256.2" y2="595.8" stroke="#eef6ff" stroke-width="0.85" stroke-opacity="0.01"/><line x1="-28.5" y1="603.7" x2="-27.2" y2="640.4" stroke="#eef6ff" stroke-width="0.85" stroke-opacity="0.01"/><line x1="-27.2" y1="640.4" x2="-25.7" y2="683.4" stroke="#eef6ff" stroke-width="0.85" stroke-opacity="0.02"/><line x1="-25.7" y1="683.4" x2="-23.8" y2="739.1" stroke="#eef6ff" stroke-width="0.85" stroke-opacity="0.03"/><line x1="-23.8" y1="739.1" x2="-21.2" y2="810.5" stroke="#eef6ff" stroke-width="0.85" stroke-opacity="0.04"/><line x1="-21.2" y1="810.5" x2="-4.1" y2="1297.8" stroke="#eef6ff" stroke-width="0.85" stroke-opacity="0.05"/><line x1="-297.7" y1="762.3" x2="-225.7" y2="742.1" stroke="#eef6ff" stroke-width="0.85" stroke-opacity="0.04"/><line x1="-225.7" y1="742.1" x2="-11.4" y2="682.1" stroke="#eef6ff" stroke-width="0.85" stroke-opacity="0.03"/><line x1="-11.4" y1="682.1" x2="160.7" y2="633.9" stroke="#eef6ff" stroke-width="0.85" stroke-opacity="0.02"/><line x1="160.7" y1="633.9" x2="299.0" y2="595.1" stroke="#eef6ff" stroke-width="0.85" stroke-opacity="0.01"/><line x1="-4.9" y1="603.4" x2="-1.2" y2="640.1" stroke="#eef6ff" stroke-width="0.85" stroke-opacity="0.01"/><line x1="-1.2" y1="640.1" x2="3.1" y2="683.1" stroke="#eef6ff" stroke-width="0.85" stroke-opacity="0.02"/><line x1="3.1" y1="683.1" x2="8.6" y2="738.7" stroke="#eef6ff" stroke-width="0.85" stroke-opacity="0.03"/><line x1="8.6" y1="738.7" x2="15.8" y2="810.2" stroke="#eef6ff" stroke-width="0.85" stroke-opacity="0.04"/><line x1="15.8" y1="810.2" x2="64.4" y2="1298.2" stroke="#eef6ff" stroke-width="0.85" stroke-opacity="0.05"/><line x1="-295.2" y1="778.0" x2="-167.7" y2="741.3" stroke="#eef6ff" stroke-width="0.85" stroke-opacity="0.04"/><line x1="-167.7" y1="741.3" x2="40.4" y2="681.3" stroke="#eef6ff" stroke-width="0.85" stroke-opacity="0.03"/><line x1="40.4" y1="681.3" x2="207.6" y2="633.1" stroke="#eef6ff" stroke-width="0.85" stroke-opacity="0.02"/><line x1="207.6" y1="633.1" x2="344.7" y2="593.6" stroke="#eef6ff" stroke-width="0.85" stroke-opacity="0.01"/><line x1="18.8" y1="603.0" x2="24.6" y2="638.2" stroke="#eef6ff" stroke-width="0.85" stroke-opacity="0.01"/><line x1="24.6" y1="638.2" x2="32.0" y2="682.8" stroke="#eef6ff" stroke-width="0.85" stroke-opacity="0.02"/><line x1="32.0" y1="682.8" x2="41.1" y2="738.4" stroke="#eef6ff" stroke-width="0.85" stroke-opacity="0.03"/><line x1="41.1" y1="738.4" x2="52.3" y2="806.8" stroke="#eef6ff" stroke-width="0.85" stroke-opacity="0.04"/><line x1="52.3" y1="806.8" x2="133.2" y2="1298.7" stroke="#eef6ff" stroke-width="0.85" stroke-opacity="0.05"/><line x1="-298.6" y1="796.6" x2="-104.6" y2="739.0" stroke="#eef6ff" stroke-width="0.85" stroke-opacity="0.04"/><line x1="-104.6" y1="739.0" x2="96.4" y2="679.4" stroke="#eef6ff" stroke-width="0.85" stroke-opacity="0.03"/><line x1="96.4" y1="679.4" x2="254.6" y2="632.4" stroke="#eef6ff" stroke-width="0.85" stroke-opacity="0.02"/><line x1="254.6" y1="632.4" x2="387.7" y2="592.9" stroke="#eef6ff" stroke-width="0.85" stroke-opacity="0.01"/><line x1="42.6" y1="602.7" x2="50.6" y2="637.9" stroke="#eef6ff" stroke-width="0.85" stroke-opacity="0.01"/><line x1="50.6" y1="637.9" x2="60.9" y2="682.4" stroke="#eef6ff" stroke-width="0.85" stroke-opacity="0.02"/><line x1="60.9" y1="682.4" x2="73.6" y2="738.1" stroke="#eef6ff" stroke-width="0.85" stroke-opacity="0.03"/><line x1="73.6" y1="738.1" x2="89.3" y2="806.5" stroke="#eef6ff" stroke-width="0.85" stroke-opacity="0.04"/><line x1="89.3" y1="806.5" x2="202.2" y2="1299.1" stroke="#eef6ff" stroke-width="0.85" stroke-opacity="0.05"/><line x1="-295.9" y1="814.6" x2="-46.5" y2="738.3" stroke="#eef6ff" stroke-width="0.85" stroke-opacity="0.04"/><line x1="-46.5" y1="738.3" x2="148.4" y2="678.6" stroke="#eef6ff" stroke-width="0.85" stroke-opacity="0.03"/><line x1="148.4" y1="678.6" x2="304.9" y2="630.7" stroke="#eef6ff" stroke-width="0.85" stroke-opacity="0.02"/><line x1="304.9" y1="630.7" x2="433.3" y2="591.4" stroke="#eef6ff" stroke-width="0.85" stroke-opacity="0.01"/><line x1="66.0" y1="601.1" x2="76.7" y2="637.5" stroke="#eef6ff" stroke-width="0.85" stroke-opacity="0.01"/><line x1="76.7" y1="637.5" x2="89.8" y2="682.1" stroke="#eef6ff" stroke-width="0.85" stroke-opacity="0.02"/><line x1="89.8" y1="682.1" x2="105.5" y2="735.4" stroke="#eef6ff" stroke-width="0.85" stroke-opacity="0.03"/><line x1="105.5" y1="735.4" x2="126.3" y2="806.2" stroke="#eef6ff" stroke-width="0.85" stroke-opacity="0.04"/><line x1="126.3" y1="806.2" x2="271.5" y2="1299.5" stroke="#eef6ff" stroke-width="0.85" stroke-opacity="0.05"/><line x1="-299.6" y1="835.9" x2="-223.8" y2="811.9" stroke="#eef6ff" stroke-width="0.85" stroke-opacity="0.05"/><line x1="-223.8" y1="811.9" x2="16.5" y2="736.0" stroke="#eef6ff" stroke-width="0.85" stroke-opacity="0.04"/><line x1="16.5" y1="736.0" x2="204.2" y2="676.7" stroke="#eef6ff" stroke-width="0.85" stroke-opacity="0.03"/><line x1="204.2" y1="676.7" x2="352.0" y2="630.0" stroke="#eef6ff" stroke-width="0.85" stroke-opacity="0.02"/><line x1="352.0" y1="630.0" x2="476.3" y2="590.7" stroke="#eef6ff" stroke-width="0.85" stroke-opacity="0.01"/><line x1="89.7" y1="600.8" x2="102.8" y2="637.2" stroke="#eef6ff" stroke-width="0.85" stroke-opacity="0.01"/><line x1="102.8" y1="637.2" x2="118.1" y2="679.9" stroke="#eef6ff" stroke-width="0.85" stroke-opacity="0.02"/><line x1="118.1" y1="679.9" x2="138.0" y2="735.1" stroke="#eef6ff" stroke-width="0.85" stroke-opacity="0.03"/><line x1="138.0" y1="735.1" x2="163.5" y2="805.9" stroke="#eef6ff" stroke-width="0.85" stroke-opacity="0.04"/><line x1="163.5" y1="805.9" x2="341.1" y2="1300.0" stroke="#eef6ff" stroke-width="0.85" stroke-opacity="0.05"/><line x1="-296.8" y1="856.5" x2="-157.7" y2="811.1" stroke="#eef6ff" stroke-width="0.85" stroke-opacity="0.05"/><line x1="-157.7" y1="811.1" x2="74.7" y2="735.2" stroke="#eef6ff" stroke-width="0.85" stroke-opacity="0.04"/><line x1="74.7" y1="735.2" x2="256.3" y2="675.9" stroke="#eef6ff" stroke-width="0.85" stroke-opacity="0.03"/><line x1="256.3" y1="675.9" x2="402.2" y2="628.3" stroke="#eef6ff" stroke-width="0.85" stroke-opacity="0.02"/><line x1="402.2" y1="628.3" x2="521.8" y2="589.2" stroke="#eef6ff" stroke-width="0.85" stroke-opacity="0.01"/><line x1="-22.6" y1="280.5" x2="37.2" y2="421.3" stroke="#eef6ff" stroke-width="0.85" stroke-opacity="0.07"/><line x1="37.2" y1="421.3" x2="41.0" y2="430.1" stroke="#eef6ff" stroke-width="0.85" stroke-opacity="0.08"/><line x1="41.0" y1="430.1" x2="45.2" y2="439.9" stroke="#eef6ff" stroke-width="0.85" stroke-opacity="0.09"/><line x1="45.2" y1="439.9" x2="48.8" y2="448.4" stroke="#eef6ff" stroke-width="0.85" stroke-opacity="0.10"/><line x1="48.8" y1="448.4" x2="53.8" y2="460.2" stroke="#eef6ff" stroke-width="0.85" stroke-opacity="0.11"/><line x1="53.8" y1="460.2" x2="59.4" y2="473.3" stroke="#eef6ff" stroke-width="0.85" stroke-opacity="0.12"/><line x1="59.4" y1="473.3" x2="64.3" y2="484.9" stroke="#eef6ff" stroke-width="0.85" stroke-opacity="0.13"/><line x1="64.3" y1="484.9" x2="71.2" y2="501.2" stroke="#eef6ff" stroke-width="0.85" stroke-opacity="0.14"/><line x1="71.2" y1="501.2" x2="77.5" y2="515.9" stroke="#eef6ff" stroke-width="0.85" stroke-opacity="0.15"/><line x1="77.5" y1="515.9" x2="86.3" y2="536.6" stroke="#eef6ff" stroke-width="0.85" stroke-opacity="0.16"/><line x1="86.3" y1="536.6" x2="96.5" y2="560.7" stroke="#eef6ff" stroke-width="0.85" stroke-opacity="0.17"/><line x1="96.5" y1="560.7" x2="106.0" y2="582.9" stroke="#eef6ff" stroke-width="0.85" stroke-opacity="0.18"/><line x1="106.0" y1="582.9" x2="119.8" y2="615.4" stroke="#eef6ff" stroke-width="0.85" stroke-opacity="0.19"/><line x1="119.8" y1="615.4" x2="132.8" y2="646.1" stroke="#eef6ff" stroke-width="0.85" stroke-opacity="0.20"/><line x1="132.8" y1="646.1" x2="152.5" y2="692.3" stroke="#eef6ff" stroke-width="0.85" stroke-opacity="0.21"/><line x1="152.5" y1="692.3" x2="177.1" y2="750.2" stroke="#eef6ff" stroke-width="0.85" stroke-opacity="0.22"/><line x1="177.1" y1="750.2" x2="201.8" y2="808.3" stroke="#eef6ff" stroke-width="0.85" stroke-opacity="0.23"/><line x1="201.8" y1="808.3" x2="402.6" y2="1280.6" stroke="#eef6ff" stroke-width="0.85" stroke-opacity="0.24"/><line x1="-271.0" y1="871.0" x2="-82.1" y2="807.1" stroke="#eef6ff" stroke-width="0.85" stroke-opacity="0.24"/><line x1="-82.1" y1="807.1" x2="120.8" y2="738.6" stroke="#eef6ff" stroke-width="0.85" stroke-opacity="0.23"/><line x1="120.8" y1="738.6" x2="282.9" y2="683.8" stroke="#eef6ff" stroke-width="0.85" stroke-opacity="0.22"/><line x1="282.9" y1="683.8" x2="415.4" y2="639.0" stroke="#eef6ff" stroke-width="0.85" stroke-opacity="0.21"/><line x1="415.4" y1="639.0" x2="538.3" y2="597.5" stroke="#eef6ff" stroke-width="0.85" stroke-opacity="0.20"/><line x1="538.3" y1="597.5" x2="629.8" y2="566.5" stroke="#eef6ff" stroke-width="0.85" stroke-opacity="0.19"/><line x1="629.8" y1="566.5" x2="708.3" y2="540.0" stroke="#eef6ff" stroke-width="0.85" stroke-opacity="0.18"/><line x1="708.3" y1="540.0" x2="776.4" y2="517.0" stroke="#eef6ff" stroke-width="0.85" stroke-opacity="0.17"/><line x1="776.4" y1="517.0" x2="836.1" y2="496.8" stroke="#eef6ff" stroke-width="0.85" stroke-opacity="0.16"/><line x1="836.1" y1="496.8" x2="894.9" y2="476.9" stroke="#eef6ff" stroke-width="0.85" stroke-opacity="0.15"/><line x1="894.9" y1="476.9" x2="941.1" y2="461.3" stroke="#eef6ff" stroke-width="0.85" stroke-opacity="0.14"/><line x1="941.1" y1="461.3" x2="982.5" y2="447.4" stroke="#eef6ff" stroke-width="0.85" stroke-opacity="0.13"/><line x1="982.5" y1="447.4" x2="1019.8" y2="434.8" stroke="#eef6ff" stroke-width="0.85" stroke-opacity="0.12"/><line x1="1019.8" y1="434.8" x2="1053.5" y2="423.3" stroke="#eef6ff" stroke-width="0.85" stroke-opacity="0.11"/><line x1="1053.5" y1="423.3" x2="1087.9" y2="411.7" stroke="#eef6ff" stroke-width="0.85" stroke-opacity="0.10"/><line x1="1087.9" y1="411.7" x2="1098.6" y2="408.1" stroke="#eef6ff" stroke-width="0.85" stroke-opacity="0.09"/><line x1="137.2" y1="600.1" x2="154.3" y2="635.0" stroke="#eef6ff" stroke-width="0.85" stroke-opacity="0.01"/><line x1="154.3" y1="635.0" x2="176.0" y2="679.2" stroke="#eef6ff" stroke-width="0.85" stroke-opacity="0.02"/><line x1="176.0" y1="679.2" x2="203.1" y2="734.4" stroke="#eef6ff" stroke-width="0.85" stroke-opacity="0.03"/><line x1="203.1" y1="734.4" x2="236.4" y2="802.2" stroke="#eef6ff" stroke-width="0.85" stroke-opacity="0.04"/><line x1="236.4" y1="802.2" x2="475.9" y2="1290.1" stroke="#eef6ff" stroke-width="0.85" stroke-opacity="0.05"/><line x1="-297.7" y1="905.0" x2="-19.6" y2="807.6" stroke="#eef6ff" stroke-width="0.85" stroke-opacity="0.05"/><line x1="-19.6" y1="807.6" x2="195.9" y2="732.2" stroke="#eef6ff" stroke-width="0.85" stroke-opacity="0.04"/><line x1="195.9" y1="732.2" x2="364.2" y2="673.2" stroke="#eef6ff" stroke-width="0.85" stroke-opacity="0.03"/><line x1="364.2" y1="673.2" x2="499.4" y2="625.8" stroke="#eef6ff" stroke-width="0.85" stroke-opacity="0.02"/><line x1="499.4" y1="625.8" x2="610.3" y2="587.0" stroke="#eef6ff" stroke-width="0.85" stroke-opacity="0.01"/><line x1="161.0" y1="599.8" x2="180.4" y2="634.7" stroke="#eef6ff" stroke-width="0.85" stroke-opacity="0.01"/><line x1="180.4" y1="634.7" x2="205.0" y2="678.9" stroke="#eef6ff" stroke-width="0.85" stroke-opacity="0.02"/><line x1="205.0" y1="678.9" x2="235.8" y2="734.1" stroke="#eef6ff" stroke-width="0.85" stroke-opacity="0.03"/><line x1="235.8" y1="734.1" x2="273.6" y2="801.9" stroke="#eef6ff" stroke-width="0.85" stroke-opacity="0.04"/><line x1="273.6" y1="801.9" x2="545.6" y2="1290.5" stroke="#eef6ff" stroke-width="0.85" stroke-opacity="0.05"/><line x1="-294.5" y1="930.9" x2="52.1" y2="804.9" stroke="#eef6ff" stroke-width="0.85" stroke-opacity="0.05"/><line x1="52.1" y1="804.9" x2="258.5" y2="729.9" stroke="#eef6ff" stroke-width="0.85" stroke-opacity="0.04"/><line x1="258.5" y1="729.9" x2="416.6" y2="672.4" stroke="#eef6ff" stroke-width="0.85" stroke-opacity="0.03"/><line x1="416.6" y1="672.4" x2="546.7" y2="625.1" stroke="#eef6ff" stroke-width="0.85" stroke-opacity="0.02"/><line x1="546.7" y1="625.1" x2="653.5" y2="586.3" stroke="#eef6ff" stroke-width="0.85" stroke-opacity="0.01"/><line x1="184.1" y1="598.2" x2="206.6" y2="634.3" stroke="#eef6ff" stroke-width="0.85" stroke-opacity="0.01"/><line x1="206.6" y1="634.3" x2="234.1" y2="678.5" stroke="#eef6ff" stroke-width="0.85" stroke-opacity="0.02"/><line x1="234.1" y1="678.5" x2="267.0" y2="731.4" stroke="#eef6ff" stroke-width="0.85" stroke-opacity="0.03"/><line x1="267.0" y1="731.4" x2="310.8" y2="801.6" stroke="#eef6ff" stroke-width="0.85" stroke-opacity="0.04"/><line x1="310.8" y1="801.6" x2="615.6" y2="1290.9" stroke="#eef6ff" stroke-width="0.85" stroke-opacity="0.05"/><line x1="-298.9" y1="961.9" x2="118.5" y2="804.1" stroke="#eef6ff" stroke-width="0.85" stroke-opacity="0.05"/><line x1="118.5" y1="804.1" x2="317.0" y2="729.1" stroke="#eef6ff" stroke-width="0.85" stroke-opacity="0.04"/><line x1="317.0" y1="729.1" x2="472.1" y2="670.5" stroke="#eef6ff" stroke-width="0.85" stroke-opacity="0.03"/><line x1="472.1" y1="670.5" x2="596.6" y2="623.4" stroke="#eef6ff" stroke-width="0.85" stroke-opacity="0.02"/><line x1="596.6" y1="623.4" x2="698.8" y2="584.8" stroke="#eef6ff" stroke-width="0.85" stroke-opacity="0.01"/><line x1="207.8" y1="597.8" x2="232.8" y2="634.0" stroke="#eef6ff" stroke-width="0.85" stroke-opacity="0.01"/><line x1="232.8" y1="634.0" x2="261.9" y2="676.3" stroke="#eef6ff" stroke-width="0.85" stroke-opacity="0.02"/><line x1="261.9" y1="676.3" x2="299.7" y2="731.1" stroke="#eef6ff" stroke-width="0.85" stroke-opacity="0.03"/><line x1="299.7" y1="731.1" x2="348.1" y2="801.3" stroke="#eef6ff" stroke-width="0.85" stroke-opacity="0.04"/><line x1="348.1" y1="801.3" x2="685.9" y2="1291.3" stroke="#eef6ff" stroke-width="0.85" stroke-opacity="0.05"/><line x1="-295.4" y1="992.5" x2="190.0" y2="801.4" stroke="#eef6ff" stroke-width="0.85" stroke-opacity="0.05"/><line x1="190.0" y1="801.4" x2="379.4" y2="726.8" stroke="#eef6ff" stroke-width="0.85" stroke-opacity="0.04"/><line x1="379.4" y1="726.8" x2="524.5" y2="669.7" stroke="#eef6ff" stroke-width="0.85" stroke-opacity="0.03"/><line x1="524.5" y1="669.7" x2="644.0" y2="622.6" stroke="#eef6ff" stroke-width="0.85" stroke-opacity="0.02"/><line x1="644.0" y1="622.6" x2="742.1" y2="584.0" stroke="#eef6ff" stroke-width="0.85" stroke-opacity="0.01"/><line x1="231.7" y1="597.5" x2="259.0" y2="633.7" stroke="#eef6ff" stroke-width="0.85" stroke-opacity="0.01"/><line x1="259.0" y1="633.7" x2="291.0" y2="676.0" stroke="#eef6ff" stroke-width="0.85" stroke-opacity="0.02"/><line x1="291.0" y1="676.0" x2="332.4" y2="730.7" stroke="#eef6ff" stroke-width="0.85" stroke-opacity="0.03"/><line x1="332.4" y1="730.7" x2="385.5" y2="801.0" stroke="#eef6ff" stroke-width="0.85" stroke-opacity="0.04"/><line x1="385.5" y1="801.0" x2="756.5" y2="1291.8" stroke="#eef6ff" stroke-width="0.85" stroke-opacity="0.05"/><line x1="-291.6" y1="1025.9" x2="256.6" y2="800.6" stroke="#eef6ff" stroke-width="0.85" stroke-opacity="0.05"/><line x1="256.6" y1="800.6" x2="438.1" y2="726.0" stroke="#eef6ff" stroke-width="0.85" stroke-opacity="0.04"/><line x1="438.1" y1="726.0" x2="579.9" y2="667.8" stroke="#eef6ff" stroke-width="0.85" stroke-opacity="0.03"/><line x1="579.9" y1="667.8" x2="693.8" y2="621.0" stroke="#eef6ff" stroke-width="0.85" stroke-opacity="0.02"/><line x1="693.8" y1="621.0" x2="787.3" y2="582.6" stroke="#eef6ff" stroke-width="0.85" stroke-opacity="0.01"/><line x1="255.5" y1="597.2" x2="284.0" y2="631.8" stroke="#eef6ff" stroke-width="0.85" stroke-opacity="0.01"/><line x1="284.0" y1="631.8" x2="320.1" y2="675.6" stroke="#eef6ff" stroke-width="0.85" stroke-opacity="0.02"/><line x1="320.1" y1="675.6" x2="365.1" y2="730.4" stroke="#eef6ff" stroke-width="0.85" stroke-opacity="0.03"/><line x1="365.1" y1="730.4" x2="420.5" y2="797.7" stroke="#eef6ff" stroke-width="0.85" stroke-opacity="0.04"/><line x1="420.5" y1="797.7" x2="827.3" y2="1292.2" stroke="#eef6ff" stroke-width="0.85" stroke-opacity="0.05"/><line x1="-296.4" y1="1066.2" x2="327.8" y2="797.9" stroke="#eef6ff" stroke-width="0.85" stroke-opacity="0.05"/><line x1="327.8" y1="797.9" x2="496.9" y2="725.3" stroke="#eef6ff" stroke-width="0.85" stroke-opacity="0.04"/><line x1="496.9" y1="725.3" x2="632.5" y2="667.0" stroke="#eef6ff" stroke-width="0.85" stroke-opacity="0.03"/><line x1="632.5" y1="667.0" x2="741.3" y2="620.2" stroke="#eef6ff" stroke-width="0.85" stroke-opacity="0.02"/><line x1="741.3" y1="620.2" x2="830.6" y2="581.8" stroke="#eef6ff" stroke-width="0.85" stroke-opacity="0.01"/><line x1="279.4" y1="596.8" x2="310.2" y2="631.5" stroke="#eef6ff" stroke-width="0.85" stroke-opacity="0.01"/><line x1="310.2" y1="631.5" x2="349.2" y2="675.3" stroke="#eef6ff" stroke-width="0.85" stroke-opacity="0.02"/><line x1="349.2" y1="675.3" x2="397.9" y2="730.1" stroke="#eef6ff" stroke-width="0.85" stroke-opacity="0.03"/><line x1="397.9" y1="730.1" x2="457.8" y2="797.4" stroke="#eef6ff" stroke-width="0.85" stroke-opacity="0.04"/><line x1="457.8" y1="797.4" x2="898.5" y2="1292.6" stroke="#eef6ff" stroke-width="0.85" stroke-opacity="0.05"/><line x1="-292.3" y1="1106.6" x2="394.6" y2="797.1" stroke="#eef6ff" stroke-width="0.85" stroke-opacity="0.05"/><line x1="394.6" y1="797.1" x2="559.1" y2="723.0" stroke="#eef6ff" stroke-width="0.85" stroke-opacity="0.04"/><line x1="559.1" y1="723.0" x2="687.7" y2="665.1" stroke="#eef6ff" stroke-width="0.85" stroke-opacity="0.03"/><line x1="687.7" y1="665.1" x2="791.0" y2="618.5" stroke="#eef6ff" stroke-width="0.85" stroke-opacity="0.02"/><line x1="791.0" y1="618.5" x2="874.0" y2="581.1" stroke="#eef6ff" stroke-width="0.85" stroke-opacity="0.01"/><line x1="302.1" y1="595.3" x2="336.5" y2="631.1" stroke="#eef6ff" stroke-width="0.85" stroke-opacity="0.01"/><line x1="336.5" y1="631.1" x2="378.4" y2="675.0" stroke="#eef6ff" stroke-width="0.85" stroke-opacity="0.02"/><line x1="378.4" y1="675.0" x2="428.6" y2="727.4" stroke="#eef6ff" stroke-width="0.85" stroke-opacity="0.03"/><line x1="428.6" y1="727.4" x2="495.3" y2="797.1" stroke="#eef6ff" stroke-width="0.85" stroke-opacity="0.04"/><line x1="495.3" y1="797.1" x2="969.9" y2="1293.1" stroke="#eef6ff" stroke-width="0.85" stroke-opacity="0.05"/><line x1="-297.7" y1="1156.0" x2="465.5" y2="794.5" stroke="#eef6ff" stroke-width="0.85" stroke-opacity="0.05"/><line x1="465.5" y1="794.5" x2="618.1" y2="722.2" stroke="#eef6ff" stroke-width="0.85" stroke-opacity="0.04"/><line x1="618.1" y1="722.2" x2="740.4" y2="664.3" stroke="#eef6ff" stroke-width="0.85" stroke-opacity="0.03"/><line x1="740.4" y1="664.3" x2="838.6" y2="617.8" stroke="#eef6ff" stroke-width="0.85" stroke-opacity="0.02"/><line x1="838.6" y1="617.8" x2="919.1" y2="579.6" stroke="#eef6ff" stroke-width="0.85" stroke-opacity="0.01"/><line x1="326.0" y1="594.9" x2="362.7" y2="630.8" stroke="#eef6ff" stroke-width="0.85" stroke-opacity="0.01"/><line x1="362.7" y1="630.8" x2="407.6" y2="674.6" stroke="#eef6ff" stroke-width="0.85" stroke-opacity="0.02"/><line x1="407.6" y1="674.6" x2="461.4" y2="727.0" stroke="#eef6ff" stroke-width="0.85" stroke-opacity="0.03"/><line x1="461.4" y1="727.0" x2="532.8" y2="796.8" stroke="#eef6ff" stroke-width="0.85" stroke-opacity="0.04"/><line x1="532.8" y1="796.8" x2="1041.6" y2="1293.5" stroke="#eef6ff" stroke-width="0.85" stroke-opacity="0.05"/><line x1="-293.2" y1="1206.0" x2="532.5" y2="793.7" stroke="#eef6ff" stroke-width="0.85" stroke-opacity="0.05"/><line x1="532.5" y1="793.7" x2="680.1" y2="720.0" stroke="#eef6ff" stroke-width="0.85" stroke-opacity="0.04"/><line x1="680.1" y1="720.0" x2="795.5" y2="662.3" stroke="#eef6ff" stroke-width="0.85" stroke-opacity="0.03"/><line x1="795.5" y1="662.3" x2="888.1" y2="616.1" stroke="#eef6ff" stroke-width="0.85" stroke-opacity="0.02"/><line x1="888.1" y1="616.1" x2="962.6" y2="578.9" stroke="#eef6ff" stroke-width="0.85" stroke-opacity="0.01"/><line x1="5.4" y1="279.1" x2="158.5" y2="419.3" stroke="#eef6ff" stroke-width="0.85" stroke-opacity="0.07"/><line x1="158.5" y1="419.3" x2="166.2" y2="426.3" stroke="#eef6ff" stroke-width="0.85" stroke-opacity="0.08"/><line x1="166.2" y1="426.3" x2="176.6" y2="435.9" stroke="#eef6ff" stroke-width="0.85" stroke-opacity="0.09"/><line x1="176.6" y1="435.9" x2="188.1" y2="446.4" stroke="#eef6ff" stroke-width="0.85" stroke-opacity="0.10"/><line x1="188.1" y1="446.4" x2="198.2" y2="455.6" stroke="#eef6ff" stroke-width="0.85" stroke-opacity="0.11"/><line x1="198.2" y1="455.6" x2="212.2" y2="468.4" stroke="#eef6ff" stroke-width="0.85" stroke-opacity="0.12"/><line x1="212.2" y1="468.4" x2="227.9" y2="482.8" stroke="#eef6ff" stroke-width="0.85" stroke-opacity="0.13"/><line x1="227.9" y1="482.8" x2="241.9" y2="495.7" stroke="#eef6ff" stroke-width="0.85" stroke-opacity="0.14"/><line x1="241.9" y1="495.7" x2="261.6" y2="513.7" stroke="#eef6ff" stroke-width="0.85" stroke-opacity="0.15"/><line x1="261.6" y1="513.7" x2="279.5" y2="530.1" stroke="#eef6ff" stroke-width="0.85" stroke-opacity="0.16"/><line x1="279.5" y1="530.1" x2="305.1" y2="553.5" stroke="#eef6ff" stroke-width="0.85" stroke-opacity="0.17"/><line x1="305.1" y1="553.5" x2="335.1" y2="581.0" stroke="#eef6ff" stroke-width="0.85" stroke-opacity="0.18"/><line x1="335.1" y1="581.0" x2="363.1" y2="606.6" stroke="#eef6ff" stroke-width="0.85" stroke-opacity="0.19"/><line x1="363.1" y1="606.6" x2="404.5" y2="644.6" stroke="#eef6ff" stroke-width="0.85" stroke-opacity="0.20"/><line x1="404.5" y1="644.6" x2="444.4" y2="681.1" stroke="#eef6ff" stroke-width="0.85" stroke-opacity="0.21"/><line x1="444.4" y1="681.1" x2="505.4" y2="737.0" stroke="#eef6ff" stroke-width="0.85" stroke-opacity="0.22"/><line x1="505.4" y1="737.0" x2="584.0" y2="809.0" stroke="#eef6ff" stroke-width="0.85" stroke-opacity="0.23"/><line x1="584.0" y1="809.0" x2="1058.5" y2="1243.4" stroke="#eef6ff" stroke-width="0.85" stroke-opacity="0.24"/><line x1="-260.8" y1="1247.3" x2="611.4" y2="786.7" stroke="#eef6ff" stroke-width="0.85" stroke-opacity="0.24"/><line x1="611.4" y1="786.7" x2="736.2" y2="720.8" stroke="#eef6ff" stroke-width="0.85" stroke-opacity="0.23"/><line x1="736.2" y1="720.8" x2="836.0" y2="668.0" stroke="#eef6ff" stroke-width="0.85" stroke-opacity="0.22"/><line x1="836.0" y1="668.0" x2="917.8" y2="624.9" stroke="#eef6ff" stroke-width="0.85" stroke-opacity="0.21"/><line x1="917.8" y1="624.9" x2="985.9" y2="588.9" stroke="#eef6ff" stroke-width="0.85" stroke-opacity="0.20"/><line x1="985.9" y1="588.9" x2="1043.6" y2="558.4" stroke="#eef6ff" stroke-width="0.85" stroke-opacity="0.19"/><line x1="1043.6" y1="558.4" x2="1098.7" y2="529.3" stroke="#eef6ff" stroke-width="0.85" stroke-opacity="0.18"/><line x1="373.9" y1="594.3" x2="413.7" y2="628.6" stroke="#eef6ff" stroke-width="0.85" stroke-opacity="0.01"/><line x1="413.7" y1="628.6" x2="464.1" y2="672.1" stroke="#eef6ff" stroke-width="0.85" stroke-opacity="0.02"/><line x1="464.1" y1="672.1" x2="527.1" y2="726.4" stroke="#eef6ff" stroke-width="0.85" stroke-opacity="0.03"/><line x1="527.1" y1="726.4" x2="604.5" y2="793.1" stroke="#eef6ff" stroke-width="0.85" stroke-opacity="0.04"/><line x1="604.5" y1="793.1" x2="1092.1" y2="1213.5" stroke="#eef6ff" stroke-width="0.85" stroke-opacity="0.05"/><line x1="-236.0" y1="1298.4" x2="670.4" y2="790.2" stroke="#eef6ff" stroke-width="0.85" stroke-opacity="0.05"/><line x1="670.4" y1="790.2" x2="801.1" y2="716.9" stroke="#eef6ff" stroke-width="0.85" stroke-opacity="0.04"/><line x1="801.1" y1="716.9" x2="903.2" y2="659.6" stroke="#eef6ff" stroke-width="0.85" stroke-opacity="0.03"/><line x1="903.2" y1="659.6" x2="985.3" y2="613.7" stroke="#eef6ff" stroke-width="0.85" stroke-opacity="0.02"/><line x1="985.3" y1="613.7" x2="1051.2" y2="576.7" stroke="#eef6ff" stroke-width="0.85" stroke-opacity="0.01"/><line x1="397.8" y1="593.9" x2="440.0" y2="628.3" stroke="#eef6ff" stroke-width="0.85" stroke-opacity="0.01"/><line x1="440.0" y1="628.3" x2="493.4" y2="671.7" stroke="#eef6ff" stroke-width="0.85" stroke-opacity="0.02"/><line x1="493.4" y1="671.7" x2="560.1" y2="726.0" stroke="#eef6ff" stroke-width="0.85" stroke-opacity="0.03"/><line x1="560.1" y1="726.0" x2="642.0" y2="792.8" stroke="#eef6ff" stroke-width="0.85" stroke-opacity="0.04"/><line x1="642.0" y1="792.8" x2="1093.8" y2="1160.6" stroke="#eef6ff" stroke-width="0.85" stroke-opacity="0.05"/><line x1="-113.6" y1="1298.2" x2="737.8" y2="789.4" stroke="#eef6ff" stroke-width="0.85" stroke-opacity="0.05"/><line x1="737.8" y1="789.4" x2="860.4" y2="716.1" stroke="#eef6ff" stroke-width="0.85" stroke-opacity="0.04"/><line x1="860.4" y1="716.1" x2="956.2" y2="658.9" stroke="#eef6ff" stroke-width="0.85" stroke-opacity="0.03"/><line x1="956.2" y1="658.9" x2="1033.0" y2="612.9" stroke="#eef6ff" stroke-width="0.85" stroke-opacity="0.02"/><line x1="1033.0" y1="612.9" x2="1096.1" y2="575.2" stroke="#eef6ff" stroke-width="0.85" stroke-opacity="0.01"/><line x1="420.2" y1="592.3" x2="466.3" y2="627.9" stroke="#eef6ff" stroke-width="0.85" stroke-opacity="0.01"/><line x1="466.3" y1="627.9" x2="522.7" y2="671.4" stroke="#eef6ff" stroke-width="0.85" stroke-opacity="0.02"/><line x1="522.7" y1="671.4" x2="590.1" y2="723.4" stroke="#eef6ff" stroke-width="0.85" stroke-opacity="0.03"/><line x1="590.1" y1="723.4" x2="679.7" y2="792.5" stroke="#eef6ff" stroke-width="0.85" stroke-opacity="0.04"/><line x1="679.7" y1="792.5" x2="1095.2" y2="1113.1" stroke="#eef6ff" stroke-width="0.85" stroke-opacity="0.05"/><line x1="9.5" y1="1298.1" x2="808.3" y2="786.7" stroke="#eef6ff" stroke-width="0.85" stroke-opacity="0.05"/><line x1="808.3" y1="786.7" x2="922.0" y2="713.9" stroke="#eef6ff" stroke-width="0.85" stroke-opacity="0.04"/><line x1="922.0" y1="713.9" x2="1011.0" y2="656.9" stroke="#eef6ff" stroke-width="0.85" stroke-opacity="0.03"/><line x1="1011.0" y1="656.9" x2="1080.9" y2="612.1" stroke="#eef6ff" stroke-width="0.85" stroke-opacity="0.02"/><line x1="1080.9" y1="612.1" x2="1099.1" y2="600.5" stroke="#eef6ff" stroke-width="0.85" stroke-opacity="0.01"/><line x1="444.2" y1="592.0" x2="492.7" y2="627.6" stroke="#eef6ff" stroke-width="0.85" stroke-opacity="0.01"/><line x1="492.7" y1="627.6" x2="552.0" y2="671.0" stroke="#eef6ff" stroke-width="0.85" stroke-opacity="0.02"/><line x1="552.0" y1="671.0" x2="623.0" y2="723.0" stroke="#eef6ff" stroke-width="0.85" stroke-opacity="0.03"/><line x1="623.0" y1="723.0" x2="717.4" y2="792.2" stroke="#eef6ff" stroke-width="0.85" stroke-opacity="0.04"/><line x1="717.4" y1="792.2" x2="1096.6" y2="1070.0" stroke="#eef6ff" stroke-width="0.85" stroke-opacity="0.05"/><line x1="133.2" y1="1298.0" x2="875.9" y2="785.9" stroke="#eef6ff" stroke-width="0.85" stroke-opacity="0.05"/><line x1="875.9" y1="785.9" x2="981.5" y2="713.0" stroke="#eef6ff" stroke-width="0.85" stroke-opacity="0.04"/><line x1="981.5" y1="713.0" x2="1064.0" y2="656.1" stroke="#eef6ff" stroke-width="0.85" stroke-opacity="0.03"/><line x1="1064.0" y1="656.1" x2="1099.6" y2="631.6" stroke="#eef6ff" stroke-width="0.85" stroke-opacity="0.02"/><line x1="468.1" y1="591.7" x2="519.1" y2="627.2" stroke="#eef6ff" stroke-width="0.85" stroke-opacity="0.01"/><line x1="519.1" y1="627.2" x2="578.8" y2="668.9" stroke="#eef6ff" stroke-width="0.85" stroke-opacity="0.02"/><line x1="578.8" y1="668.9" x2="656.0" y2="722.7" stroke="#eef6ff" stroke-width="0.85" stroke-opacity="0.03"/><line x1="656.0" y1="722.7" x2="755.2" y2="791.9" stroke="#eef6ff" stroke-width="0.85" stroke-opacity="0.04"/><line x1="755.2" y1="791.9" x2="1097.8" y2="1030.9" stroke="#eef6ff" stroke-width="0.85" stroke-opacity="0.05"/><line x1="257.6" y1="1297.8" x2="946.1" y2="783.2" stroke="#eef6ff" stroke-width="0.85" stroke-opacity="0.05"/><line x1="946.1" y1="783.2" x2="1042.9" y2="710.8" stroke="#eef6ff" stroke-width="0.85" stroke-opacity="0.04"/><line x1="1042.9" y1="710.8" x2="1098.5" y2="669.3" stroke="#eef6ff" stroke-width="0.85" stroke-opacity="0.03"/><line x1="492.2" y1="591.3" x2="543.3" y2="625.4" stroke="#eef6ff" stroke-width="0.85" stroke-opacity="0.01"/><line x1="543.3" y1="625.4" x2="608.1" y2="668.5" stroke="#eef6ff" stroke-width="0.85" stroke-opacity="0.02"/><line x1="608.1" y1="668.5" x2="689.1" y2="722.4" stroke="#eef6ff" stroke-width="0.85" stroke-opacity="0.03"/><line x1="689.1" y1="722.4" x2="788.5" y2="788.5" stroke="#eef6ff" stroke-width="0.85" stroke-opacity="0.04"/><line x1="788.5" y1="788.5" x2="1098.9" y2="995.1" stroke="#eef6ff" stroke-width="0.85" stroke-opacity="0.05"/><line x1="382.7" y1="1297.7" x2="1013.9" y2="782.4" stroke="#eef6ff" stroke-width="0.85" stroke-opacity="0.05"/><line x1="1013.9" y1="782.4" x2="1099.0" y2="712.8" stroke="#eef6ff" stroke-width="0.85" stroke-opacity="0.04"/><line x1="516.2" y1="591.0" x2="569.7" y2="625.0" stroke="#eef6ff" stroke-width="0.85" stroke-opacity="0.01"/><line x1="569.7" y1="625.0" x2="637.5" y2="668.2" stroke="#eef6ff" stroke-width="0.85" stroke-opacity="0.02"/><line x1="637.5" y1="668.2" x2="722.2" y2="722.0" stroke="#eef6ff" stroke-width="0.85" stroke-opacity="0.03"/><line x1="722.2" y1="722.0" x2="826.2" y2="788.2" stroke="#eef6ff" stroke-width="0.85" stroke-opacity="0.04"/><line x1="826.2" y1="788.2" x2="1100.0" y2="962.4" stroke="#eef6ff" stroke-width="0.85" stroke-opacity="0.05"/><line x1="508.4" y1="1297.5" x2="1083.8" y2="779.7" stroke="#eef6ff" stroke-width="0.85" stroke-opacity="0.05"/><line x1="1083.8" y1="779.7" x2="1099.6" y2="765.5" stroke="#eef6ff" stroke-width="0.85" stroke-opacity="0.04"/><line x1="538.3" y1="589.4" x2="596.2" y2="624.7" stroke="#eef6ff" stroke-width="0.85" stroke-opacity="0.01"/><line x1="596.2" y1="624.7" x2="666.9" y2="667.8" stroke="#eef6ff" stroke-width="0.85" stroke-opacity="0.02"/><line x1="666.9" y1="667.8" x2="751.6" y2="719.4" stroke="#eef6ff" stroke-width="0.85" stroke-opacity="0.03"/><line x1="751.6" y1="719.4" x2="864.1" y2="787.9" stroke="#eef6ff" stroke-width="0.85" stroke-opacity="0.04"/><line x1="864.1" y1="787.9" x2="1093.1" y2="927.5" stroke="#eef6ff" stroke-width="0.85" stroke-opacity="0.05"/><line x1="634.9" y1="1297.4" x2="1098.3" y2="832.6" stroke="#eef6ff" stroke-width="0.85" stroke-opacity="0.05"/><line x1="562.3" y1="589.1" x2="622.7" y2="624.4" stroke="#eef6ff" stroke-width="0.85" stroke-opacity="0.01"/><line x1="622.7" y1="624.4" x2="696.4" y2="667.5" stroke="#eef6ff" stroke-width="0.85" stroke-opacity="0.02"/><line x1="696.4" y1="667.5" x2="784.6" y2="719.0" stroke="#eef6ff" stroke-width="0.85" stroke-opacity="0.03"/><line x1="784.6" y1="719.0" x2="902.0" y2="787.6" stroke="#eef6ff" stroke-width="0.85" stroke-opacity="0.04"/><line x1="902.0" y1="787.6" x2="1094.3" y2="900.0" stroke="#eef6ff" stroke-width="0.85" stroke-opacity="0.05"/><line x1="762.1" y1="1297.3" x2="1098.9" y2="915.3" stroke="#eef6ff" stroke-width="0.85" stroke-opacity="0.05"/><line x1="32.5" y1="277.7" x2="278.2" y2="415.7" stroke="#eef6ff" stroke-width="0.85" stroke-opacity="0.07"/><line x1="278.2" y1="415.7" x2="293.6" y2="424.3" stroke="#eef6ff" stroke-width="0.85" stroke-opacity="0.08"/><line x1="293.6" y1="424.3" x2="306.9" y2="431.8" stroke="#eef6ff" stroke-width="0.85" stroke-opacity="0.09"/><line x1="306.9" y1="431.8" x2="325.2" y2="442.1" stroke="#eef6ff" stroke-width="0.85" stroke-opacity="0.10"/><line x1="325.2" y1="442.1" x2="345.6" y2="453.5" stroke="#eef6ff" stroke-width="0.85" stroke-opacity="0.11"/><line x1="345.6" y1="453.5" x2="363.5" y2="463.6" stroke="#eef6ff" stroke-width="0.85" stroke-opacity="0.12"/><line x1="363.5" y1="463.6" x2="388.5" y2="477.6" stroke="#eef6ff" stroke-width="0.85" stroke-opacity="0.13"/><line x1="388.5" y1="477.6" x2="416.7" y2="493.5" stroke="#eef6ff" stroke-width="0.85" stroke-opacity="0.14"/><line x1="416.7" y1="493.5" x2="442.1" y2="507.7" stroke="#eef6ff" stroke-width="0.85" stroke-opacity="0.15"/><line x1="442.1" y1="507.7" x2="478.1" y2="528.0" stroke="#eef6ff" stroke-width="0.85" stroke-opacity="0.16"/><line x1="478.1" y1="528.0" x2="511.0" y2="546.4" stroke="#eef6ff" stroke-width="0.85" stroke-opacity="0.17"/><line x1="511.0" y1="546.4" x2="558.5" y2="573.1" stroke="#eef6ff" stroke-width="0.85" stroke-opacity="0.18"/><line x1="558.5" y1="573.1" x2="614.9" y2="604.8" stroke="#eef6ff" stroke-width="0.85" stroke-opacity="0.19"/><line x1="614.9" y1="604.8" x2="668.3" y2="634.8" stroke="#eef6ff" stroke-width="0.85" stroke-opacity="0.20"/><line x1="668.3" y1="634.8" x2="748.6" y2="679.9" stroke="#eef6ff" stroke-width="0.85" stroke-opacity="0.21"/><line x1="748.6" y1="679.9" x2="849.5" y2="736.5" stroke="#eef6ff" stroke-width="0.85" stroke-opacity="0.22"/><line x1="849.5" y1="736.5" x2="950.8" y2="793.4" stroke="#eef6ff" stroke-width="0.85" stroke-opacity="0.23"/><line x1="950.8" y1="793.4" x2="1078.1" y2="864.9" stroke="#eef6ff" stroke-width="0.85" stroke-opacity="0.24"/><line x1="889.6" y1="1297.6" x2="1098.9" y2="1024.4" stroke="#eef6ff" stroke-width="0.85" stroke-opacity="0.24"/><line x1="610.5" y1="588.4" x2="675.7" y2="623.7" stroke="#eef6ff" stroke-width="0.85" stroke-opacity="0.01"/><line x1="675.7" y1="623.7" x2="752.1" y2="664.9" stroke="#eef6ff" stroke-width="0.85" stroke-opacity="0.02"/><line x1="752.1" y1="664.9" x2="851.0" y2="718.4" stroke="#eef6ff" stroke-width="0.85" stroke-opacity="0.03"/><line x1="851.0" y1="718.4" x2="972.5" y2="784.0" stroke="#eef6ff" stroke-width="0.85" stroke-opacity="0.04"/><line x1="972.5" y1="784.0" x2="1096.3" y2="850.9" stroke="#eef6ff" stroke-width="0.85" stroke-opacity="0.05"/><line x1="1018.5" y1="1297.0" x2="1097.7" y2="1175.1" stroke="#eef6ff" stroke-width="0.85" stroke-opacity="0.05"/><line x1="634.6" y1="588.1" x2="699.5" y2="621.8" stroke="#eef6ff" stroke-width="0.85" stroke-opacity="0.01"/><line x1="699.5" y1="621.8" x2="781.6" y2="664.6" stroke="#eef6ff" stroke-width="0.85" stroke-opacity="0.02"/><line x1="781.6" y1="664.6" x2="884.3" y2="718.0" stroke="#eef6ff" stroke-width="0.85" stroke-opacity="0.03"/><line x1="884.3" y1="718.0" x2="1010.4" y2="783.7" stroke="#eef6ff" stroke-width="0.85" stroke-opacity="0.04"/><line x1="1010.4" y1="783.7" x2="1097.3" y2="828.9" stroke="#eef6ff" stroke-width="0.85" stroke-opacity="0.05"/><line x1="656.3" y1="586.5" x2="726.0" y2="621.5" stroke="#eef6ff" stroke-width="0.85" stroke-opacity="0.01"/><line x1="726.0" y1="621.5" x2="811.2" y2="664.2" stroke="#eef6ff" stroke-width="0.85" stroke-opacity="0.02"/><line x1="811.2" y1="664.2" x2="913.0" y2="715.4" stroke="#eef6ff" stroke-width="0.85" stroke-opacity="0.03"/><line x1="913.0" y1="715.4" x2="1048.4" y2="783.3" stroke="#eef6ff" stroke-width="0.85" stroke-opacity="0.04"/><line x1="1048.4" y1="783.3" x2="1098.1" y2="808.3" stroke="#eef6ff" stroke-width="0.85" stroke-opacity="0.05"/><line x1="680.4" y1="586.2" x2="752.6" y2="621.1" stroke="#eef6ff" stroke-width="0.85" stroke-opacity="0.01"/><line x1="752.6" y1="621.1" x2="840.8" y2="663.9" stroke="#eef6ff" stroke-width="0.85" stroke-opacity="0.02"/><line x1="840.8" y1="663.9" x2="946.2" y2="715.0" stroke="#eef6ff" stroke-width="0.85" stroke-opacity="0.03"/><line x1="946.2" y1="715.0" x2="1086.5" y2="783.0" stroke="#eef6ff" stroke-width="0.85" stroke-opacity="0.04"/><line x1="1086.5" y1="783.0" x2="1099.0" y2="789.1" stroke="#eef6ff" stroke-width="0.85" stroke-opacity="0.05"/><line x1="704.6" y1="585.8" x2="779.2" y2="620.8" stroke="#eef6ff" stroke-width="0.85" stroke-opacity="0.01"/><line x1="779.2" y1="620.8" x2="866.5" y2="661.7" stroke="#eef6ff" stroke-width="0.85" stroke-opacity="0.02"/><line x1="866.5" y1="661.7" x2="979.5" y2="714.7" stroke="#eef6ff" stroke-width="0.85" stroke-opacity="0.03"/><line x1="979.5" y1="714.7" x2="1099.7" y2="771.0" stroke="#eef6ff" stroke-width="0.85" stroke-opacity="0.04"/><line x1="728.7" y1="585.5" x2="805.8" y2="620.5" stroke="#eef6ff" stroke-width="0.85" stroke-opacity="0.01"/><line x1="805.8" y1="620.5" x2="896.1" y2="661.4" stroke="#eef6ff" stroke-width="0.85" stroke-opacity="0.02"/><line x1="896.1" y1="661.4" x2="1012.9" y2="714.3" stroke="#eef6ff" stroke-width="0.85" stroke-opacity="0.03"/><line x1="1012.9" y1="714.3" x2="1094.5" y2="751.4" stroke="#eef6ff" stroke-width="0.85" stroke-opacity="0.04"/><line x1="753.0" y1="585.1" x2="829.2" y2="618.6" stroke="#eef6ff" stroke-width="0.85" stroke-opacity="0.01"/><line x1="829.2" y1="618.6" x2="925.7" y2="661.0" stroke="#eef6ff" stroke-width="0.85" stroke-opacity="0.02"/><line x1="925.7" y1="661.0" x2="1046.3" y2="714.0" stroke="#eef6ff" stroke-width="0.85" stroke-opacity="0.03"/><line x1="1046.3" y1="714.0" x2="1095.4" y2="735.6" stroke="#eef6ff" stroke-width="0.85" stroke-opacity="0.04"/><line x1="774.3" y1="583.6" x2="855.8" y2="618.3" stroke="#eef6ff" stroke-width="0.85" stroke-opacity="0.01"/><line x1="855.8" y1="618.3" x2="955.4" y2="660.7" stroke="#eef6ff" stroke-width="0.85" stroke-opacity="0.02"/><line x1="955.4" y1="660.7" x2="1074.4" y2="711.4" stroke="#eef6ff" stroke-width="0.85" stroke-opacity="0.03"/><line x1="1074.4" y1="711.4" x2="1096.2" y2="720.6" stroke="#eef6ff" stroke-width="0.85" stroke-opacity="0.04"/><line x1="798.5" y1="583.2" x2="882.5" y2="617.9" stroke="#eef6ff" stroke-width="0.85" stroke-opacity="0.01"/><line x1="882.5" y1="617.9" x2="985.1" y2="660.3" stroke="#eef6ff" stroke-width="0.85" stroke-opacity="0.02"/><line x1="985.1" y1="660.3" x2="1096.9" y2="706.5" stroke="#eef6ff" stroke-width="0.85" stroke-opacity="0.03"/><line x1="58.7" y1="276.4" x2="401.1" y2="413.8" stroke="#eef6ff" stroke-width="0.85" stroke-opacity="0.07"/><line x1="401.1" y1="413.8" x2="418.0" y2="420.5" stroke="#eef6ff" stroke-width="0.85" stroke-opacity="0.08"/><line x1="418.0" y1="420.5" x2="441.1" y2="429.8" stroke="#eef6ff" stroke-width="0.85" stroke-opacity="0.09"/><line x1="441.1" y1="429.8" x2="466.6" y2="440.0" stroke="#eef6ff" stroke-width="0.85" stroke-opacity="0.10"/><line x1="466.6" y1="440.0" x2="489.0" y2="449.0" stroke="#eef6ff" stroke-width="0.85" stroke-opacity="0.11"/><line x1="489.0" y1="449.0" x2="520.0" y2="461.5" stroke="#eef6ff" stroke-width="0.85" stroke-opacity="0.12"/><line x1="520.0" y1="461.5" x2="547.6" y2="472.5" stroke="#eef6ff" stroke-width="0.85" stroke-opacity="0.13"/><line x1="547.6" y1="472.5" x2="586.0" y2="487.9" stroke="#eef6ff" stroke-width="0.85" stroke-opacity="0.14"/><line x1="586.0" y1="487.9" x2="629.9" y2="505.5" stroke="#eef6ff" stroke-width="0.85" stroke-opacity="0.15"/><line x1="629.9" y1="505.5" x2="669.6" y2="521.5" stroke="#eef6ff" stroke-width="0.85" stroke-opacity="0.16"/><line x1="669.6" y1="521.5" x2="726.5" y2="544.3" stroke="#eef6ff" stroke-width="0.85" stroke-opacity="0.17"/><line x1="726.5" y1="544.3" x2="778.9" y2="565.3" stroke="#eef6ff" stroke-width="0.85" stroke-opacity="0.18"/><line x1="778.9" y1="565.3" x2="855.5" y2="596.0" stroke="#eef6ff" stroke-width="0.85" stroke-opacity="0.19"/><line x1="855.5" y1="596.0" x2="947.8" y2="633.1" stroke="#eef6ff" stroke-width="0.85" stroke-opacity="0.20"/><line x1="947.8" y1="633.1" x2="1036.6" y2="668.7" stroke="#eef6ff" stroke-width="0.85" stroke-opacity="0.21"/><line x1="1036.6" y1="668.7" x2="1087.2" y2="689.0" stroke="#eef6ff" stroke-width="0.85" stroke-opacity="0.22"/><line x1="847.0" y1="582.6" x2="936.0" y2="617.2" stroke="#eef6ff" stroke-width="0.85" stroke-opacity="0.01"/><line x1="936.0" y1="617.2" x2="1040.1" y2="657.8" stroke="#eef6ff" stroke-width="0.85" stroke-opacity="0.02"/><line x1="1040.1" y1="657.8" x2="1098.3" y2="680.5" stroke="#eef6ff" stroke-width="0.85" stroke-opacity="0.03"/><line x1="871.3" y1="582.2" x2="958.9" y2="615.4" stroke="#eef6ff" stroke-width="0.85" stroke-opacity="0.01"/><line x1="958.9" y1="615.4" x2="1069.8" y2="657.5" stroke="#eef6ff" stroke-width="0.85" stroke-opacity="0.02"/><line x1="1069.8" y1="657.5" x2="1099.0" y2="668.5" stroke="#eef6ff" stroke-width="0.85" stroke-opacity="0.03"/><line x1="892.4" y1="580.7" x2="985.6" y2="615.1" stroke="#eef6ff" stroke-width="0.85" stroke-opacity="0.01"/><line x1="985.6" y1="615.1" x2="1099.6" y2="657.1" stroke="#eef6ff" stroke-width="0.85" stroke-opacity="0.02"/><line x1="916.6" y1="580.3" x2="1012.4" y2="614.7" stroke="#eef6ff" stroke-width="0.85" stroke-opacity="0.01"/><line x1="1012.4" y1="614.7" x2="1095.4" y2="644.5" stroke="#eef6ff" stroke-width="0.85" stroke-opacity="0.02"/><line x1="940.9" y1="580.0" x2="1039.2" y2="614.4" stroke="#eef6ff" stroke-width="0.85" stroke-opacity="0.01"/><line x1="1039.2" y1="614.4" x2="1096.1" y2="634.3" stroke="#eef6ff" stroke-width="0.85" stroke-opacity="0.02"/><line x1="965.3" y1="579.6" x2="1066.0" y2="614.0" stroke="#eef6ff" stroke-width="0.85" stroke-opacity="0.01"/><line x1="1066.0" y1="614.0" x2="1096.7" y2="624.5" stroke="#eef6ff" stroke-width="0.85" stroke-opacity="0.02"/><line x1="989.6" y1="579.3" x2="1088.6" y2="612.2" stroke="#eef6ff" stroke-width="0.85" stroke-opacity="0.01"/><line x1="1088.6" y1="612.2" x2="1097.3" y2="615.1" stroke="#eef6ff" stroke-width="0.85" stroke-opacity="0.02"/><line x1="1014.0" y1="579.0" x2="1097.9" y2="606.2" stroke="#eef6ff" stroke-width="0.85" stroke-opacity="0.01"/><line x1="1034.7" y1="577.4" x2="1098.5" y2="597.6" stroke="#eef6ff" stroke-width="0.85" stroke-opacity="0.01"/><line x1="84.2" y1="275.1" x2="520.1" y2="410.1" stroke="#eef6ff" stroke-width="0.85" stroke-opacity="0.07"/><line x1="520.1" y1="410.1" x2="547.1" y2="418.5" stroke="#eef6ff" stroke-width="0.85" stroke-opacity="0.08"/><line x1="547.1" y1="418.5" x2="570.7" y2="425.8" stroke="#eef6ff" stroke-width="0.85" stroke-opacity="0.09"/><line x1="570.7" y1="425.8" x2="602.9" y2="435.8" stroke="#eef6ff" stroke-width="0.85" stroke-opacity="0.10"/><line x1="602.9" y1="435.8" x2="638.7" y2="446.9" stroke="#eef6ff" stroke-width="0.85" stroke-opacity="0.11"/><line x1="638.7" y1="446.9" x2="670.4" y2="456.7" stroke="#eef6ff" stroke-width="0.85" stroke-opacity="0.12"/><line x1="670.4" y1="456.7" x2="714.4" y2="470.3" stroke="#eef6ff" stroke-width="0.85" stroke-opacity="0.13"/><line x1="714.4" y1="470.3" x2="753.6" y2="482.5" stroke="#eef6ff" stroke-width="0.85" stroke-opacity="0.14"/><line x1="753.6" y1="482.5" x2="808.9" y2="499.6" stroke="#eef6ff" stroke-width="0.85" stroke-opacity="0.15"/><line x1="808.9" y1="499.6" x2="872.4" y2="519.2" stroke="#eef6ff" stroke-width="0.85" stroke-opacity="0.16"/><line x1="872.4" y1="519.2" x2="930.4" y2="537.2" stroke="#eef6ff" stroke-width="0.85" stroke-opacity="0.17"/><line x1="930.4" y1="537.2" x2="1014.3" y2="563.2" stroke="#eef6ff" stroke-width="0.85" stroke-opacity="0.18"/><line x1="1014.3" y1="563.2" x2="1092.5" y2="587.4" stroke="#eef6ff" stroke-width="0.85" stroke-opacity="0.19"/><line x1="1083.5" y1="576.7" x2="1099.5" y2="581.6" stroke="#eef6ff" stroke-width="0.85" stroke-opacity="0.01"/><line x1="108.9" y1="273.9" x2="638.3" y2="406.6" stroke="#eef6ff" stroke-width="0.85" stroke-opacity="0.07"/><line x1="638.3" y1="406.6" x2="670.9" y2="414.7" stroke="#eef6ff" stroke-width="0.85" stroke-opacity="0.08"/><line x1="670.9" y1="414.7" x2="706.7" y2="423.7" stroke="#eef6ff" stroke-width="0.85" stroke-opacity="0.09"/><line x1="706.7" y1="423.7" x2="738.1" y2="431.6" stroke="#eef6ff" stroke-width="0.85" stroke-opacity="0.10"/><line x1="738.1" y1="431.6" x2="781.3" y2="442.4" stroke="#eef6ff" stroke-width="0.85" stroke-opacity="0.11"/><line x1="781.3" y1="442.4" x2="829.5" y2="454.5" stroke="#eef6ff" stroke-width="0.85" stroke-opacity="0.12"/><line x1="829.5" y1="454.5" x2="872.3" y2="465.2" stroke="#eef6ff" stroke-width="0.85" stroke-opacity="0.13"/><line x1="872.3" y1="465.2" x2="932.1" y2="480.2" stroke="#eef6ff" stroke-width="0.85" stroke-opacity="0.14"/><line x1="932.1" y1="480.2" x2="985.9" y2="493.7" stroke="#eef6ff" stroke-width="0.85" stroke-opacity="0.15"/><line x1="985.9" y1="493.7" x2="1062.2" y2="512.8" stroke="#eef6ff" stroke-width="0.85" stroke-opacity="0.16"/><line x1="1062.2" y1="512.8" x2="1096.0" y2="521.3" stroke="#eef6ff" stroke-width="0.85" stroke-opacity="0.17"/><line x1="132.9" y1="272.7" x2="763.0" y2="404.6" stroke="#eef6ff" stroke-width="0.85" stroke-opacity="0.07"/><line x1="763.0" y1="404.6" x2="793.7" y2="411.0" stroke="#eef6ff" stroke-width="0.85" stroke-opacity="0.08"/><line x1="793.7" y1="411.0" x2="835.6" y2="419.7" stroke="#eef6ff" stroke-width="0.85" stroke-opacity="0.09"/><line x1="835.6" y1="419.7" x2="881.8" y2="429.4" stroke="#eef6ff" stroke-width="0.85" stroke-opacity="0.10"/><line x1="881.8" y1="429.4" x2="922.5" y2="437.9" stroke="#eef6ff" stroke-width="0.85" stroke-opacity="0.11"/><line x1="922.5" y1="437.9" x2="978.7" y2="449.7" stroke="#eef6ff" stroke-width="0.85" stroke-opacity="0.12"/><line x1="978.7" y1="449.7" x2="1041.9" y2="462.9" stroke="#eef6ff" stroke-width="0.85" stroke-opacity="0.13"/><line x1="1041.9" y1="462.9" x2="1098.4" y2="474.7" stroke="#eef6ff" stroke-width="0.85" stroke-opacity="0.14"/><line x1="156.2" y1="271.5" x2="880.5" y2="401.0" stroke="#eef6ff" stroke-width="0.85" stroke-opacity="0.07"/><line x1="880.5" y1="401.0" x2="924.8" y2="408.9" stroke="#eef6ff" stroke-width="0.85" stroke-opacity="0.08"/><line x1="924.8" y1="408.9" x2="963.4" y2="415.8" stroke="#eef6ff" stroke-width="0.85" stroke-opacity="0.09"/><line x1="963.4" y1="415.8" x2="1016.2" y2="425.2" stroke="#eef6ff" stroke-width="0.85" stroke-opacity="0.10"/><line x1="1016.2" y1="425.2" x2="1074.8" y2="435.7" stroke="#eef6ff" stroke-width="0.85" stroke-opacity="0.11"/><line x1="1074.8" y1="435.7" x2="1087.4" y2="438.0" stroke="#eef6ff" stroke-width="0.85" stroke-opacity="0.12"/><line x1="178.8" y1="270.4" x2="1006.8" y2="398.9" stroke="#eef6ff" stroke-width="0.85" stroke-opacity="0.07"/><line x1="1006.8" y1="398.9" x2="1046.9" y2="405.2" stroke="#eef6ff" stroke-width="0.85" stroke-opacity="0.08"/><line x1="1046.9" y1="405.2" x2="1090.2" y2="411.9" stroke="#eef6ff" stroke-width="0.85" stroke-opacity="0.09"/><line x1="200.8" y1="269.3" x2="1092.4" y2="391.1" stroke="#eef6ff" stroke-width="0.85" stroke-opacity="0.07"/><line x1="222.2" y1="268.2" x2="1094.2" y2="374.2" stroke="#eef6ff" stroke-width="0.85" stroke-opacity="0.07"/><line x1="243.0" y1="267.2" x2="1095.8" y2="360.1" stroke="#eef6ff" stroke-width="0.85" stroke-opacity="0.07"/><line x1="263.2" y1="266.2" x2="1097.1" y2="348.3" stroke="#eef6ff" stroke-width="0.85" stroke-opacity="0.07"/><line x1="282.9" y1="265.2" x2="1098.1" y2="338.1" stroke="#eef6ff" stroke-width="0.85" stroke-opacity="0.07"/><line x1="305.1" y1="264.5" x2="1099.1" y2="329.3" stroke="#eef6ff" stroke-width="0.85" stroke-opacity="0.07"/><line x1="336.7" y1="264.5" x2="1099.9" y2="321.6" stroke="#eef6ff" stroke-width="0.85" stroke-opacity="0.07"/><line x1="369.6" y1="264.5" x2="1094.7" y2="314.5" stroke="#eef6ff" stroke-width="0.85" stroke-opacity="0.07"/><line x1="403.9" y1="264.5" x2="1095.7" y2="308.5" stroke="#eef6ff" stroke-width="0.85" stroke-opacity="0.07"/><line x1="439.0" y1="264.5" x2="1096.6" y2="303.2" stroke="#eef6ff" stroke-width="0.85" stroke-opacity="0.07"/><line x1="476.5" y1="264.5" x2="1097.4" y2="298.4" stroke="#eef6ff" stroke-width="0.85" stroke-opacity="0.07"/><line x1="515.8" y1="264.5" x2="1098.1" y2="294.1" stroke="#eef6ff" stroke-width="0.85" stroke-opacity="0.07"/><line x1="557.0" y1="264.5" x2="1098.7" y2="290.2" stroke="#eef6ff" stroke-width="0.85" stroke-opacity="0.07"/><line x1="600.3" y1="264.5" x2="1099.3" y2="286.6" stroke="#eef6ff" stroke-width="0.85" stroke-opacity="0.07"/><line x1="645.8" y1="264.6" x2="1099.9" y2="283.3" stroke="#eef6ff" stroke-width="0.85" stroke-opacity="0.07"/><line x1="692.1" y1="264.5" x2="1096.3" y2="280.1" stroke="#eef6ff" stroke-width="0.85" stroke-opacity="0.07"/><line x1="742.4" y1="264.5" x2="1097.0" y2="277.3" stroke="#eef6ff" stroke-width="0.85" stroke-opacity="0.07"/><line x1="795.5" y1="264.5" x2="1097.5" y2="274.8" stroke="#eef6ff" stroke-width="0.85" stroke-opacity="0.07"/><line x1="851.7" y1="264.6" x2="1098.0" y2="272.4" stroke="#eef6ff" stroke-width="0.85" stroke-opacity="0.07"/><line x1="911.2" y1="264.6" x2="1098.5" y2="270.1" stroke="#eef6ff" stroke-width="0.85" stroke-opacity="0.07"/><line x1="971.6" y1="264.5" x2="1099.0" y2="268.1" stroke="#eef6ff" stroke-width="0.85" stroke-opacity="0.07"/></svg>
<div class="a" style="left:0;top:175px;width:767px;height:60px;background:linear-gradient(to bottom,rgba(105,98,92,1),rgba(105,98,92,0))"></div>
<svg style="left:0;top:-89px" width="767" height="989" viewBox="0 0 767 989"><ellipse cx="302.5" cy="575" rx="158.5" ry="67" fill="#8f7d5e"/><ellipse cx="302.5" cy="572.5" rx="158" ry="66" fill="#b3a182"/><ellipse cx="302.5" cy="572" rx="150" ry="61.5" fill="none" stroke="#a8946f" stroke-width="1"/><ellipse cx="302.5" cy="571.5" rx="146" ry="59" fill="#b6a486"/><polygon points="262.0,616.0 348.0,594.0 422.0,560.0 440.0,575.0 380.0,612.0 300.0,630.0" fill="#9d8b6c" opacity="0.3"/><polygon points="211.9,551.4 249.1,582.8 250.2,603.7 215.3,568.8" fill="#a38b67" /><polygon points="338.6,564.2 421.2,544.4 421.2,559.5 346.7,580.5" fill="#bba27d" /><polygon points="338.6,564.2 421.2,544.4 417.0,541.0 335.0,560.0" fill="#cdb692" /><polygon points="203.7,489.8 240.9,520.0 246.7,580.5 213.0,552.6" fill="#94482e" /><polygon points="240.9,518.0 413.0,484.0 413.0,544.4 246.7,580.5" fill="#b95d3c" /><polygon points="200.2,466.5 235.1,503.7 236.3,518.8 203.7,482.8" fill="#a88a63" /><polygon points="235.1,503.7 421.2,472.3 421.2,484.0 236.3,518.8" fill="#caab80" /><polygon points="195.5,405.6 234.0,431.0 236.3,503.7 201.0,468.0" fill="#b99f7d" /><polygon points="234.0,429.3 414.2,404.0 414.2,472.0 236.3,503.7" fill="#d3bf9f" /><polygon points="183.7,381.5 209.0,392.0 233.3,419.9 422.4,392.6 407.0,388.0 366.0,379.0" fill="#b8a487" /><polygon points="183.7,381.5 233.3,419.9 233.3,433.0 184.7,391.6" fill="#b08d63" /><polygon points="233.3,419.9 422.4,392.6 422.4,405.7 233.3,433.0" fill="#cdac80" /><polygon points="181.7,318.8 207.0,324.8 209.0,392.0 186.7,381.0" fill="#bea583" /><polygon points="207.0,323.8 365.8,313.1 365.8,380.0 209.0,392.0" fill="#d6c3a4" /><polygon points="173.6,304.2 307.1,296.1 371.8,303.0 207.0,312.7" fill="#d6b98c" /><polygon points="173.6,304.2 207.0,312.7 207.0,324.5 174.6,314.7" fill="#b18d62" /><polygon points="207.0,312.7 371.8,303.0 371.8,313.5 207.0,324.5" fill="#caa679" /><polygon points="306.0,277.0 324.0,277.0 324.0,305.0 308.0,305.0" fill="#8b9099" /><polygon points="324.0,280.0 353.6,280.0 353.6,303.6 324.0,305.0" fill="#9a9fa9" /><polygon points="309.5,283.0 314.5,283.0 314.5,300.0 309.5,300.0" fill="#5a5f68" /><polygon points="326.5,287.0 331.5,287.0 331.5,303.0 326.5,303.0" fill="#5a5f68" /><polygon points="314.0,269.5 325.0,269.5 325.0,277.0 314.0,277.0" fill="#6a5d56" /><polygon points="313.0,268.0 326.0,268.0 326.0,271.0 313.0,271.0" fill="#7d7069" /><polygon points="331.5,272.0 343.5,272.0 343.5,280.0 331.5,280.0" fill="#6a5d56" /><polygon points="330.5,270.0 344.5,270.0 344.5,273.0 330.5,273.0" fill="#7d7069" /><polygon points="222.1,343.4 278.8,340.0 280.8,391.6 225.2,397.7" fill="#d4d6d2" /><polygon points="226.3,346.4 246.6,345.1 249.0,391.9 228.9,394.0" fill="#7fa3c6" /><polygon points="227.6,370.2 247.8,368.5 249.0,391.9 228.9,394.0" fill="#a9c4dc" opacity="0.6"/><polygon points="254.6,344.6 275.0,343.3 276.8,388.9 256.7,391.1" fill="#7fa3c6" /><polygon points="255.7,367.8 275.9,366.1 276.8,388.9 256.7,391.1" fill="#a9c4dc" opacity="0.6"/><polygon points="313.2,332.5 345.5,330.5 345.5,369.3 313.8,372.4" fill="#d4d6d2" /><polygon points="315.5,334.7 327.1,334.0 327.4,368.7 316.0,369.8" fill="#a8c0d8" /><polygon points="315.7,352.3 327.3,351.4 327.4,368.7 316.0,369.8" fill="#c6d6e6" opacity="0.6"/><polygon points="331.6,333.7 343.2,333.0 343.3,367.2 331.9,368.3" fill="#a8c0d8" /><polygon points="331.7,351.0 343.3,350.1 343.3,367.2 331.9,368.3" fill="#c6d6e6" opacity="0.6"/><polygon points="188.8,332.9 205.0,339.0 207.0,379.4 192.8,371.4" fill="#b9bcbb" /><polygon points="189.8,335.5 193.6,337.0 196.7,371.4 193.2,369.5" fill="#6a8fb8" /><polygon points="191.5,352.5 195.2,354.2 196.7,371.4 193.2,369.5" fill="#88a8c8" opacity="0.6"/><polygon points="195.2,337.6 199.0,339.1 201.4,374.0 198.0,372.1" fill="#6a8fb8" /><polygon points="196.6,354.8 200.2,356.5 201.4,374.0 198.0,372.1" fill="#88a8c8" opacity="0.6"/><polygon points="200.5,339.6 204.4,341.1 206.2,376.6 202.8,374.7" fill="#6a8fb8" /><polygon points="201.6,357.2 205.3,358.9 206.2,376.6 202.8,374.7" fill="#88a8c8" opacity="0.6"/><path d="M227 379.5L279 374" stroke="#b5722d" stroke-width="1.5"/><polygon points="271.2,443.3 307.9,436.7 309.5,481.6 273.5,489.8" fill="#d4d6d2" /><polygon points="273.9,445.6 287.1,443.2 288.9,483.5 275.9,486.4" fill="#a4bdd6" /><polygon points="274.9,466.0 288.0,463.4 288.9,483.5 275.9,486.4" fill="#c2d3e4" opacity="0.6"/><polygon points="292.2,442.3 305.4,439.9 306.9,479.5 293.9,482.4" fill="#a4bdd6" /><polygon points="293.1,462.3 306.2,459.7 306.9,479.5 293.9,482.4" fill="#c2d3e4" opacity="0.6"/><polygon points="352.6,430.5 386.3,424.2 387.0,464.2 353.7,472.3" fill="#d4d6d2" /><polygon points="355.0,432.6 367.1,430.3 368.0,466.4 356.0,469.2" fill="#a4bdd6" /><polygon points="355.5,450.9 367.6,448.3 368.0,466.4 356.0,469.2" fill="#c2d3e4" opacity="0.6"/><polygon points="371.9,429.4 384.0,427.0 384.6,462.4 372.6,465.2" fill="#a4bdd6" /><polygon points="372.2,447.3 384.3,444.7 384.6,462.4 372.6,465.2" fill="#c2d3e4" opacity="0.6"/><polygon points="200.2,420.0 207.2,424.7 207.9,450.2 201.4,444.4" fill="#b9bcbb" /><polygon points="201.2,422.1 206.3,425.6 206.9,447.9 202.2,443.7" fill="#6a8fb8" /><polygon points="201.7,432.9 206.6,436.7 206.9,447.9 202.2,443.7" fill="#88a8c8" opacity="0.6"/><polygon points="216.5,435.1 228.1,442.1 229.3,480.5 218.8,472.3" fill="#b9bcbb" /><polygon points="217.4,437.8 221.6,440.4 223.2,473.6 219.4,470.6" fill="#6a8fb8" /><polygon points="218.4,454.2 222.4,457.0 223.2,473.6 219.4,470.6" fill="#88a8c8" opacity="0.6"/><polygon points="223.2,441.4 227.4,443.9 228.5,477.6 224.7,474.7" fill="#6a8fb8" /><polygon points="223.9,458.0 227.9,460.8 228.5,477.6 224.7,474.7" fill="#88a8c8" opacity="0.6"/><polygon points="273.0,485.0 312.0,479.0 312.0,484.0 275.0,491.0" fill="#a9aaa6" /><path d="M272 484L277 473L281 480L286 470L290 479L295 467L300 476L305 468L312 478L310 482L278 488Z" fill="#c0753a"/><circle cx="277" cy="482" r="2.2" fill="#4f9a32"/><circle cx="291" cy="481" r="2.6" fill="#efc21f"/><circle cx="302" cy="478" r="2.3" fill="#e07a22"/><circle cx="309" cy="478" r="2" fill="#4f9a32"/><circle cx="283" cy="475" r="2" fill="#b8a53a"/><circle cx="297" cy="472" r="2" fill="#b8a53a"/><polygon points="354.0,468.0 389.0,462.0 389.0,467.0 356.0,474.0" fill="#a9aaa6" /><path d="M353 467L358 456L362 463L367 453L371 462L376 450L381 459L386 451L389 461L387 465L359 471Z" fill="#c0753a"/><circle cx="358" cy="465" r="2.2" fill="#4f9a32"/><circle cx="372" cy="464" r="2.6" fill="#efc21f"/><circle cx="383" cy="461" r="2.3" fill="#e07a22"/><circle cx="386" cy="461" r="2" fill="#4f9a32"/><circle cx="364" cy="458" r="2" fill="#b8a53a"/><circle cx="378" cy="455" r="2" fill="#b8a53a"/><polygon points="266.0,527.4 320.0,516.5 321.9,565.3 270.0,578.1" fill="#d4d6d2" /><polygon points="270.0,529.7 289.4,525.7 292.1,569.6 273.4,574.2" fill="#8fb0d0" /><polygon points="271.7,551.9 290.8,547.7 292.1,569.6 273.4,574.2" fill="#b0c8de" opacity="0.6"/><polygon points="296.9,524.2 316.3,520.2 318.1,563.3 299.4,567.8" fill="#8fb0d0" /><polygon points="298.2,546.0 317.2,541.7 318.1,563.3 299.4,567.8" fill="#b0c8de" opacity="0.6"/><path d="M270 558L321 546.5" stroke="#b5822d" stroke-width="1.3"/><polygon points="342.8,507.9 395.6,497.4 395.6,534.0 343.7,544.4" fill="#d4d6d2" /><polygon points="345.3,509.6 358.0,507.1 358.5,539.2 346.1,541.7" fill="#9db9d4" /><polygon points="345.7,525.7 358.3,523.2 358.5,539.2 346.1,541.7" fill="#b7cce0" opacity="0.6"/><polygon points="362.9,506.1 375.6,503.6 375.9,535.8 363.4,538.3" fill="#9db9d4" /><polygon points="363.1,522.2 375.7,519.7 375.9,535.8 363.4,538.3" fill="#b7cce0" opacity="0.6"/><polygon points="380.5,502.6 393.1,500.1 393.2,532.3 380.7,534.8" fill="#9db9d4" /><polygon points="380.6,518.7 393.2,516.2 393.2,532.3 380.7,534.8" fill="#b7cce0" opacity="0.6"/><polygon points="345.0,510.5 394.0,500.5 394.0,509.0 345.0,519.0" fill="#dfe6ec" opacity="0.8"/><polygon points="207.2,493.3 214.2,497.9 215.3,517.7 208.4,511.9" fill="#b9bcbb" /><polygon points="208.3,495.1 213.3,498.4 214.3,515.7 209.3,511.6" fill="#6a8fb8" /><polygon points="208.8,503.3 213.8,507.1 214.3,515.7 209.3,511.6" fill="#88a8c8" opacity="0.6"/><polygon points="223.5,511.9 235.1,520.0 236.3,554.9 225.8,545.6" fill="#b9bcbb" /><polygon points="224.4,514.5 228.6,517.4 230.2,547.5 226.4,544.2" fill="#6a8fb8" /><polygon points="225.4,529.4 229.4,532.5 230.2,547.5 226.4,544.2" fill="#88a8c8" opacity="0.6"/><polygon points="230.2,518.6 234.4,521.5 235.5,552.2 231.7,548.8" fill="#6a8fb8" /><polygon points="230.9,533.7 234.9,536.8 235.5,552.2 231.7,548.8" fill="#88a8c8" opacity="0.6"/><polygon points="256.0,582.8 330.5,565.3 344.4,593.3 265.3,613.0" fill="#8a8682" /><path d="M258.3 590.3L334.0 572.3" stroke="#a39f9a" stroke-width="1.6"/><path d="M260.6 597.9L337.4 579.3" stroke="#a39f9a" stroke-width="1.6"/><path d="M263.0 605.5L340.9 586.3" stroke="#a39f9a" stroke-width="1.6"/><polygon points="249.1,581.6 256.0,582.8 267.7,617.7 260.7,617.7" fill="#c7a981" /><polygon points="330.5,560.7 336.3,559.5 350.2,593.3 344.4,595.6" fill="#c7a981" /><path d="M367.8 361.2L386.0 386.0" stroke="#85501f" stroke-width="1.8" stroke-linecap="round"/><path d="M367.8 380.0L386.0 367.0" stroke="#85501f" stroke-width="1.8" stroke-linecap="round"/><path d="M386.0 367.0L407.2 394.6" stroke="#85501f" stroke-width="1.8" stroke-linecap="round"/><path d="M386.0 386.0L406.2 373.4" stroke="#85501f" stroke-width="1.8" stroke-linecap="round"/><path d="M367.8 361.2L406.2 373.4" stroke="#b06d2c" stroke-width="2" stroke-linecap="round"/><path d="M367.8 361.2L367.8 380.0" stroke="#b06d2c" stroke-width="2.2" stroke-linecap="round"/><path d="M386.0 367.0L386.0 386.0" stroke="#b06d2c" stroke-width="2.2" stroke-linecap="round"/><path d="M406.2 373.4L407.2 394.6" stroke="#b06d2c" stroke-width="2.2" stroke-linecap="round"/><path d="M208.0 379.4L221.0 408.0" stroke="#85501f" stroke-width="1.8" stroke-linecap="round"/><path d="M209.0 396.0L221.0 387.0" stroke="#85501f" stroke-width="1.8" stroke-linecap="round"/><path d="M221.0 387.0L235.3 418.9" stroke="#85501f" stroke-width="1.8" stroke-linecap="round"/><path d="M221.0 408.0L234.3 394.6" stroke="#85501f" stroke-width="1.8" stroke-linecap="round"/><path d="M208.0 379.4L234.3 394.6" stroke="#85501f" stroke-width="2.2" stroke-linecap="round"/><path d="M208.0 379.4L209.0 396.0" stroke="#85501f" stroke-width="2.2" stroke-linecap="round"/><path d="M221.0 387.0L221.0 408.0" stroke="#85501f" stroke-width="2.2" stroke-linecap="round"/><path d="M234.3 394.6L235.3 418.9" stroke="#85501f" stroke-width="2.2" stroke-linecap="round"/><path d="M234.3 394.6L271.9 413.7" stroke="#b06d2c" stroke-width="2" stroke-linecap="round"/><path d="M235.3 418.9L270.9 390.1" stroke="#b06d2c" stroke-width="2" stroke-linecap="round"/><path d="M270.9 390.1L309.6 408.4" stroke="#b06d2c" stroke-width="2" stroke-linecap="round"/><path d="M271.9 413.7L308.6 385.4" stroke="#b06d2c" stroke-width="2" stroke-linecap="round"/><path d="M308.6 385.4L343.1 403.7" stroke="#b06d2c" stroke-width="2" stroke-linecap="round"/><path d="M309.6 408.4L342.1 381.3" stroke="#b06d2c" stroke-width="2" stroke-linecap="round"/><path d="M342.1 381.3L375.7 399.1" stroke="#b06d2c" stroke-width="2" stroke-linecap="round"/><path d="M343.1 403.7L374.7 377.3" stroke="#b06d2c" stroke-width="2" stroke-linecap="round"/><path d="M374.7 377.3L407.2 394.6" stroke="#b06d2c" stroke-width="2" stroke-linecap="round"/><path d="M375.7 399.1L406.2 373.4" stroke="#b06d2c" stroke-width="2" stroke-linecap="round"/><path d="M234.3 394.6L406.2 373.4" stroke="#b06d2c" stroke-width="2.4" stroke-linecap="round"/><path d="M234.3 394.6L235.3 418.9" stroke="#b06d2c" stroke-width="2.6" stroke-linecap="round"/><path d="M270.9 390.1L271.9 413.7" stroke="#b06d2c" stroke-width="2.6" stroke-linecap="round"/><path d="M308.6 385.4L309.6 408.4" stroke="#b06d2c" stroke-width="2.6" stroke-linecap="round"/><path d="M342.1 381.3L343.1 403.7" stroke="#b06d2c" stroke-width="2.6" stroke-linecap="round"/><path d="M374.7 377.3L375.7 399.1" stroke="#b06d2c" stroke-width="2.6" stroke-linecap="round"/><path d="M406.2 373.4L407.2 394.6" stroke="#b06d2c" stroke-width="2.6" stroke-linecap="round"/><ellipse cx="206" cy="602.5" rx="23" ry="10.5" fill="#b98a5c"/><ellipse cx="206" cy="600.5" rx="23" ry="10" fill="#d3a877"/><ellipse cx="206" cy="600" rx="18.5" ry="7.5" fill="#a8713f"/><path d="M197 601Q203 560 194 522Q190 505 184 494L197 488Q206 505 209 525Q216 565 214 601Q205 605 197 601Z" fill="#94633a"/><path d="M205 602Q210 560 204 522Q200 503 194 490L197 488Q206 505 209 525Q216 565 214 601Z" fill="#b5824e"/><path d="M174.0 479.0Q188.5 505.0 199.0 516.0Q203.5 495.0 174.0 479.0Z" fill="#2c7a26"/><path d="M174.0 479.0Q149.2 503.0 164.0 533.0Q170.8 507.0 174.0 479.0Z" fill="#35872a"/><path d="M174.0 479.0Q128.7 485.9 145.0 528.0Q149.3 498.1 174.0 479.0Z" fill="#3d932d"/><path d="M174.0 479.0Q166.2 508.2 186.0 532.0Q185.8 503.8 174.0 479.0Z" fill="#3f962e"/><path d="M174.0 479.0Q209.2 482.6 234.0 495.0Q214.8 461.4 174.0 479.0Z" fill="#3f962e"/><path d="M174.0 479.0Q137.2 451.4 128.0 491.0Q142.8 472.6 174.0 479.0Z" fill="#4aa634"/><path d="M174.0 479.0Q153.6 443.7 137.0 463.0Q146.4 460.3 174.0 479.0Z" fill="#58b43b"/><path d="M174.0 479.0Q200.4 455.8 215.0 456.0Q191.6 440.2 174.0 479.0Z" fill="#62bf42"/><path d="M174.0 479.0Q180.0 452.2 175.0 438.0Q162.0 451.8 174.0 479.0Z" fill="#55b23a"/><path d="M174.0 479.0Q188.3 468.6 200.0 470.0Q183.7 455.4 174.0 479.0Z" fill="#74cb4e"/><path d="M174.0 479.0Q158.2 464.0 147.0 478.0Q157.8 476.0 174.0 479.0Z" fill="#74cb4e"/></svg>
</div>
<div class="a" style="left:0px;top:91px;width:35px;height:146px;background:#22272e;border-radius:0 4px 4px 0"></div>
<div class="a" style="left:6px;top:97px;width:16px;height:1px;background:#5c626a;"></div>
<div class="a" style="left:6px;top:100px;width:16px;height:1px;background:#5c626a;"></div>
<div class="a" style="left:0px;top:108px;width:32px;height:126px;background:#2c2c2c;border-radius:0 3px 3px 0"></div>
<div class="a" style="left:0px;top:108px;width:32px;height:20px;background:#46607c;border-radius:0 3px 0 0"></div>
<div class="a" style="left:0px;top:129px;width:32px;height:20px;background:#505050;"></div>
<div class="a" style="left:0px;top:150px;width:32px;height:20px;background:#505050;"></div>
<div class="a" style="left:0px;top:171px;width:32px;height:20px;background:#505050;"></div>
<div class="a" style="left:0px;top:192px;width:32px;height:20px;background:#505050;"></div>
<div class="a" style="left:0px;top:213px;width:32px;height:21px;background:#505050;border-radius:0 0 3px 0"></div>
<svg style="left:6px;top:110px" width="16" height="16" viewBox="0 0 16 16"><path d="M4.4 8.4H12.4Q12.8 12 10.8 15H6.4Q4 12.6 4.4 8.4Z" fill="#dedede"/><path d="M8 9L7.9 1.8M6 9.2L5.1 2.8M10 9.2L10.9 2.8M11.8 10.4L13.7 5.4M5 12L1.9 8.4" stroke="#dedede" stroke-width="1.7" stroke-linecap="round" fill="none"/></svg>
<svg style="left:6px;top:131px" width="16" height="16" viewBox="0 0 16 16"><path d="M8 2V6.2M8 9.8V14M2 8H6.2M9.8 8H14" stroke="#b8b8b8" stroke-width="1.1"/><path d="M5.8 3.4L8 1L10.2 3.4M5.8 12.6L8 15L10.2 12.6M3.4 5.8L1 8L3.4 10.2M12.6 5.8L15 8L12.6 10.2" fill="none" stroke="#b8b8b8" stroke-width="1.1"/></svg>
<svg style="left:6px;top:152px" width="16" height="16" viewBox="0 0 16 16"><path d="M6.2 14.2A6.3 6.3 0 0 1 6.6 1.9M9.8 1.8A6.3 6.3 0 0 1 9.4 14.1" fill="none" stroke="#b8b8b8" stroke-width="1.1"/><path d="M9.6 4.6V1.6H12.8M6.4 11.4V14.4H3.2" fill="none" stroke="#b8b8b8" stroke-width="1.1"/></svg>
<svg style="left:7px;top:174px" width="14" height="14" viewBox="0 0 14 14"><path d="M0.6 8.6V0.6H13.4V13.4H5.4" fill="none" stroke="#b8b8b8" stroke-width="1.1"/><rect x="0.6" y="9.4" width="4" height="4" fill="none" stroke="#b8b8b8" stroke-width="1.1"/><path d="M5.6 8.4L10.4 3.6M6.8 3.4H10.6V7.2" fill="none" stroke="#b8b8b8" stroke-width="1.1"/></svg>
<svg style="left:7px;top:195px" width="14" height="14" viewBox="0 0 14 14"><path d="M4.2 1.5H9.8M4.2 12.5H9.8M1.5 4.2V9.8M12.5 4.2V9.8" stroke="#b8b8b8" stroke-width="1.1"/><rect x="0" y="0" width="3" height="3" fill="#b8b8b8"/><rect x="11" y="0" width="3" height="3" fill="#b8b8b8"/><rect x="0" y="11" width="3" height="3" fill="#b8b8b8"/><rect x="11" y="11" width="3" height="3" fill="#b8b8b8"/></svg>
<svg style="left:6px;top:215px" width="16" height="16" viewBox="0 0 16 16"><path d="M3.2 4.2A6.2 6.2 0 0 1 12.8 4.2M13.9 6.2A6.2 6.2 0 0 1 13.9 10M12.8 12A6.2 6.2 0 0 1 3.2 12M2.1 10A6.2 6.2 0 0 1 2.1 6.2" fill="none" stroke="#b8b8b8" stroke-width="1"/><path d="M8 3.6V12.4M3.6 8H12.4" stroke="#b8b8b8" stroke-width="1.2"/><path d="M8 2.4L9.7 4.6H6.3ZM8 13.6L9.7 11.4H6.3ZM2.4 8L4.6 6.3V9.7ZM13.6 8L11.4 6.3V9.7Z" fill="#b8b8b8"/><path d="M12.6 0.6H15.4V3.4ZM3.4 15.4H0.6V12.6Z" fill="#b8b8b8"/></svg>
<div class="a" style="left:663px;top:97px;width:16px;height:1px;background:#4d4f55;"></div>
<div class="a" style="left:663px;top:100px;width:16px;height:1px;background:#4d4f55;"></div>
<svg style="left:660px;top:90px" width="100" height="90" viewBox="660 90 100 90"><path d="M706 139L700 136.5L699.5 130.5L704 130L710 135Z" fill="#d9dadb"/><circle cx="701.6" cy="133" r="4.2" fill="#e6e6e6"/><path d="M719 138L734 131Q736.5 135.5 735 140L720 142Z" fill="#dfe0e1"/><ellipse cx="734.6" cy="135.6" rx="1.8" ry="4.6" transform="rotate(8 734.6 135.6)" fill="#cfd0d2"/><path d="M709.5 148L707 162Q712 165.5 716.7 162L714 148Z" fill="#dcdddf"/><path d="M711.5 148L712 164Q715 164 716.7 162L714 148Z" fill="#c8c9cb"/><path d="M704.5 137L711 132.5L721 135.5L720.5 146L712 150.5L705 146Z" fill="#cdcfd2"/><path d="M711.5 139.5L721 135.5L720.5 146L712 150.5Z" fill="#eceef1"/><path d="M704.5 137L711 132.5L721 135.5L711.5 139.5Z" fill="#d8dadc"/><path d="M704.8 112.6H719.2L711.9 132.5Z" fill="#8cd246"/><path d="M712 112.6H719.2L711.9 132.5Z" fill="#7cc23a"/><ellipse cx="712" cy="112.6" rx="7.2" ry="1" fill="#9ee258"/><path d="M683 141.3L704 142.8L686.6 154.4Z" fill="#d24c30"/><path d="M683 141.3L686.6 154.4L692 150.5Z" fill="#ab3a24"/><path d="M716 144.5L733 147L727 162.5Z" fill="#3863c7"/><ellipse cx="729.3" cy="154.6" rx="6.8" ry="8.4" transform="rotate(35 729.3 154.6)" fill="#4c88f2"/></svg>
<div class="t " style="left:707.3px;top:95.5px;color:#fff;font-size:11.5px">y</div>
<div class="t " style="left:672px;top:140px;color:#eef2f6;font-size:10.5px;opacity:.9">x</div>
<div class="t " style="left:735.8px;top:152.5px;color:#fff;font-size:11.5px">z</div>
<svg style="left:740.5px;top:105px" width="8" height="10" viewBox="0 0 8 10"><path d="M6.2 4.6V2.9Q6.2 0.9 4 0.9Q2.4 0.9 1.9 2.1" fill="none" stroke="#b6bcc8" stroke-width="1.1"/><rect x="0.5" y="4.4" width="6.8" height="4.6" rx="0.6" fill="#b6bcc8"/></svg>
<svg style="left:687px;top:187px" width="10" height="9" viewBox="0 0 10 9"><path d="M9.7 0.4L0.8 4.5L9.7 8.6M0.8 4.5H9.7" fill="none" stroke="#e6eef4" stroke-width="0.9" opacity="0.95"/></svg>
<div class="t " style="left:700px;top:184.5px;color:#e2dce3;font-size:12px;letter-spacing:0.5px;text-shadow:0 0 0.6px #e2dce3">Persp</div>
<div class="a" style="left:769px;top:44px;width:675px;height:19px;background:#282828;"></div>
<div class="a" style="left:769px;top:44px;width:96px;height:20px;background:#3c3c3c;border-radius:3px 3px 0 0"></div>
<svg style="left:777px;top:48px" width="12" height="10" viewBox="0 0 12 10"><path d="M3.5 1.5H11.5M4.5 5H11.5M4.5 8.5H11.5" stroke="#c4c4c4" stroke-width="1.2"/><path d="M1.3 0V3M0 1.5H2.6" stroke="#c4c4c4" stroke-width="0.9"/><rect x="1" y="4.3" width="1.4" height="1.4" fill="#c4c4c4"/><rect x="1" y="7.8" width="1.4" height="1.4" fill="#c4c4c4"/></svg>
<div class="t " style="left:792.6px;top:47px;letter-spacing:0.45px;font-size:12px;">Hierarchy</div>
<svg style="left:1408.5px;top:47.5px" width="10" height="11" viewBox="0 0 10 11"><path d="M7.2 5.6V3.3Q7.2 0.9 4.7 0.9Q2.6 0.9 1.9 2.4" fill="none" stroke="#c4c4c4" stroke-width="1.15"/><rect x="1" y="5.6" width="7.8" height="4.6" rx="0.7" fill="none" stroke="#c4c4c4" stroke-width="1.15"/></svg>
<svg style="left:1430px;top:48px" width="2" height="10" viewBox="0 0 2 10"><rect x="0" y="0" width="2" height="2" fill="#c4c4c4"/><rect x="0" y="4" width="2" height="2" fill="#c4c4c4"/><rect x="0" y="8" width="2" height="2" fill="#c4c4c4"/></svg>
<div class="a" style="left:769px;top:63px;width:675px;height:20px;background:#3c3c3c;"></div>
<svg style="left:776px;top:67px" width="25" height="13" viewBox="0 0 25 13"><path d="M6.2 0V12.4M0 6.2H12.4" stroke="#c4c4c4" stroke-width="1.7"/><path d="M16.7 4.2H23.7L20.2 8Z" fill="#c4c4c4"/></svg>
<div class="a" style="left:1115px;top:65px;width:326px;height:16px;background:#2a2a2a;border:1px solid #212121;border-radius:3px"></div>
<svg style="left:1120px;top:69px" width="11" height="9" viewBox="0 0 11 9"><circle cx="3.4" cy="3.4" r="2.6" fill="none" stroke="#c4c4c4" stroke-width="1.2"/><path d="M5.2 5.2L7.6 7.8" stroke="#c4c4c4" stroke-width="1.4"/><path d="M7.6 3H10.6L9.1 4.8Z" fill="#c4c4c4"/></svg>
<div class="t u" style="left:1134px;top:65px;color:#6e6e6e;font-size:11.5px">All</div>
<div class="a" style="left:1423px;top:66px;width:1px;height:14px;background:#212121;"></div>
<svg style="left:1426px;top:67px" width="13" height="12" viewBox="0 0 13 12"><path d="M4 1H1V11H11V8" fill="none" stroke="#c4c4c4" stroke-width="1.2"/><rect x="4.6" y="1" width="7" height="6.4" fill="none" stroke="#c4c4c4" stroke-width="1.2"/><path d="M6.2 5.8L9.8 2.6M7.4 2.4H10V5" fill="none" stroke="#c4c4c4" stroke-width="1"/></svg>
<div class="a" style="left:769px;top:83px;width:675px;height:1px;background:#232323;"></div>
<div class="a" style="left:769px;top:84px;width:675px;height:527px;background:#383838;"></div>
<div class="a" style="left:769px;top:84px;width:32px;height:527px;background:#2d2d2d;"></div>
<div class="a" style="left:769px;top:84px;width:675px;height:15px;background:#525252;"></div>
<div class="a" style="left:769px;top:99px;width:675px;height:1px;background:#2f2f2f;"></div>
<svg style="left:803.0px;top:89.0px" width="9" height="8" viewBox="0 0 9 8"><path d="M0 0H9L4.5 8Z" fill="#7d7d7d"/></svg>
<svg style="left:817px;top:84.8px" width="13" height="14" viewBox="0 0 13 14"><path d="M6.07 0L11.9 3.2V10.1L6.07 13.75L0.2 10.1V3.2Z" fill="#fff"/><path d="M6.07 2.5L9.3 4.45L6.07 6.3L2.83 4.45Z" fill="#525252"/><path d="M2 5.9L5.25 7.7V11.1L2 9.3Z" fill="#525252"/><path d="M10.1 5.9L6.9 7.7V11.1L10.1 9.3Z" fill="#525252"/><path d="M5.3 -0.3H6.85V2.7L6.07 3.1L5.3 2.7Z" fill="#525252"/><path d="M-0.2 9.1L2.3 10.5L1.5 11.8L-0.2 10.9Z" fill="#525252"/><path d="M12.3 9.1L9.8 10.5L10.6 11.8L12.3 10.9Z" fill="#525252"/></svg>
<div class="t " style="left:833.4px;top:84px;letter-spacing:0.309px;font-size:12px;font-weight:bold;color:#e4e4e4">SampleScene*</div>
<svg style="left:1431px;top:87px" width="2" height="10" viewBox="0 0 2 10"><rect x="0" y="0" width="2" height="2" fill="#c4c4c4"/><rect x="0" y="4" width="2" height="2" fill="#c4c4c4"/><rect x="0" y="8" width="2" height="2" fill="#c4c4c4"/></svg>
<svg style="left:829.9px;top:101px" width="13.2" height="14.2" viewBox="0 0 14 15"><path d="M7 0.8L13.2 3.9V11.1L7 14.2L0.8 11.1V3.9Z M0.8 3.9L7 7L13.2 3.9M7 7V14.2" fill="none" stroke="#c8c8c8" stroke-width="1.05" stroke-linejoin="round"/></svg>
<div class="t " style="left:846.7px;top:100px;letter-spacing:0.23px;font-size:12px;">Main Camera</div>
<svg style="left:829.9px;top:117px" width="13.2" height="14.2" viewBox="0 0 14 15"><path d="M7 0.8L13.2 3.9V11.1L7 14.2L0.8 11.1V3.9Z M0.8 3.9L7 7L13.2 3.9M7 7V14.2" fill="none" stroke="#c8c8c8" stroke-width="1.05" stroke-linejoin="round"/></svg>
<div class="t " style="left:846.7px;top:116px;letter-spacing:0.375px;font-size:12px;">Directional Light</div>
<svg style="left:829.8px;top:132.8px" width="13.2" height="14.2" viewBox="0 0 14 15"><path d="M7 0.5L13.5 3.7L7 7L0.5 3.7Z" fill="#8edcff"/><path d="M0.5 4.6L6.5 7.7V14.6L0.5 11.4Z" fill="#5fc6f2"/><path d="M13.5 4.6L7.5 7.7V14.6L13.5 11.4Z" fill="#6fd0f7"/></svg>
<div class="t " style="left:846.7px;top:132px;letter-spacing:0.22px;font-size:12px;color:#7fb0f5">Border</div>
<svg style="left:1433px;top:135px" width="6" height="10" viewBox="0 0 6 10"><path d="M0.8 0.8L5 5L0.8 9.2" fill="none" stroke="#8a8a8a" stroke-width="1.2"/></svg>
<svg style="left:829.8px;top:148.8px" width="13.2" height="14.2" viewBox="0 0 14 15"><path d="M7 0.5L13.5 3.7L7 7L0.5 3.7Z" fill="#8edcff"/><path d="M0.5 4.6L6.5 7.7V14.6L0.5 11.4Z" fill="#5fc6f2"/><path d="M13.5 4.6L7.5 7.7V14.6L13.5 11.4Z" fill="#6fd0f7"/></svg>
<div class="t " style="left:846.7px;top:148px;letter-spacing:0.13px;font-size:12px;color:#7fb0f5">Building_10</div>
<svg style="left:817.0px;top:152.5px" width="9" height="8" viewBox="0 0 9 8"><path d="M0 0H9L4.5 8Z" fill="#6d6d6d"/></svg>
<svg style="left:1433px;top:151px" width="6" height="10" viewBox="0 0 6 10"><path d="M0.8 0.8L5 5L0.8 9.2" fill="none" stroke="#8a8a8a" stroke-width="1.2"/></svg>
<svg style="left:844.4px;top:165px" width="13.2" height="14.2" viewBox="0 0 14 15"><path d="M7 0.8L13.2 3.9V11.1L7 14.2L0.8 11.1V3.9Z M0.8 3.9L7 7L13.2 3.9M7 7V14.2" fill="none" stroke="#c8c8c8" stroke-width="1.05" stroke-linejoin="round"/></svg>
<svg style="left:844.4px;top:181px" width="13.2" height="14.2" viewBox="0 0 14 15"><path d="M7 0.8L13.2 3.9V11.1L7 14.2L0.8 11.1V3.9Z M0.8 3.9L7 7L13.2 3.9M7 7V14.2" fill="none" stroke="#c8c8c8" stroke-width="1.05" stroke-linejoin="round"/></svg>
<svg style="left:844.4px;top:197px" width="13.2" height="14.2" viewBox="0 0 14 15"><path d="M7 0.8L13.2 3.9V11.1L7 14.2L0.8 11.1V3.9Z M0.8 3.9L7 7L13.2 3.9M7 7V14.2" fill="none" stroke="#c8c8c8" stroke-width="1.05" stroke-linejoin="round"/></svg>
<svg style="left:844.4px;top:213px" width="13.2" height="14.2" viewBox="0 0 14 15"><path d="M7 0.8L13.2 3.9V11.1L7 14.2L0.8 11.1V3.9Z M0.8 3.9L7 7L13.2 3.9M7 7V14.2" fill="none" stroke="#c8c8c8" stroke-width="1.05" stroke-linejoin="round"/></svg>
<svg style="left:844.4px;top:229px" width="13.2" height="14.2" viewBox="0 0 14 15"><path d="M7 0.8L13.2 3.9V11.1L7 14.2L0.8 11.1V3.9Z M0.8 3.9L7 7L13.2 3.9M7 7V14.2" fill="none" stroke="#c8c8c8" stroke-width="1.05" stroke-linejoin="round"/></svg>
<svg style="left:844.4px;top:245px" width="13.2" height="14.2" viewBox="0 0 14 15"><path d="M7 0.8L13.2 3.9V11.1L7 14.2L0.8 11.1V3.9Z M0.8 3.9L7 7L13.2 3.9M7 7V14.2" fill="none" stroke="#c8c8c8" stroke-width="1.05" stroke-linejoin="round"/></svg>
<svg style="left:844.4px;top:261px" width="13.2" height="14.2" viewBox="0 0 14 15"><path d="M7 0.8L13.2 3.9V11.1L7 14.2L0.8 11.1V3.9Z M0.8 3.9L7 7L13.2 3.9M7 7V14.2" fill="none" stroke="#c8c8c8" stroke-width="1.05" stroke-linejoin="round"/></svg>
<svg style="left:844.4px;top:277px" width="13.2" height="14.2" viewBox="0 0 14 15"><path d="M7 0.8L13.2 3.9V11.1L7 14.2L0.8 11.1V3.9Z M0.8 3.9L7 7L13.2 3.9M7 7V14.2" fill="none" stroke="#c8c8c8" stroke-width="1.05" stroke-linejoin="round"/></svg>
<svg style="left:844.4px;top:293px" width="13.2" height="14.2" viewBox="0 0 14 15"><path d="M7 0.8L13.2 3.9V11.1L7 14.2L0.8 11.1V3.9Z M0.8 3.9L7 7L13.2 3.9M7 7V14.2" fill="none" stroke="#c8c8c8" stroke-width="1.05" stroke-linejoin="round"/></svg>
<svg style="left:844.4px;top:309px" width="13.2" height="14.2" viewBox="0 0 14 15"><path d="M7 0.8L13.2 3.9V11.1L7 14.2L0.8 11.1V3.9Z M0.8 3.9L7 7L13.2 3.9M7 7V14.2" fill="none" stroke="#c8c8c8" stroke-width="1.05" stroke-linejoin="round"/></svg>
<svg style="left:844.4px;top:325px" width="13.2" height="14.2" viewBox="0 0 14 15"><path d="M7 0.8L13.2 3.9V11.1L7 14.2L0.8 11.1V3.9Z M0.8 3.9L7 7L13.2 3.9M7 7V14.2" fill="none" stroke="#c8c8c8" stroke-width="1.05" stroke-linejoin="round"/></svg>
<svg style="left:844.4px;top:341px" width="13.2" height="14.2" viewBox="0 0 14 15"><path d="M7 0.8L13.2 3.9V11.1L7 14.2L0.8 11.1V3.9Z M0.8 3.9L7 7L13.2 3.9M7 7V14.2" fill="none" stroke="#c8c8c8" stroke-width="1.05" stroke-linejoin="round"/></svg>
<svg style="left:844.4px;top:357px" width="13.2" height="14.2" viewBox="0 0 14 15"><path d="M7 0.8L13.2 3.9V11.1L7 14.2L0.8 11.1V3.9Z M0.8 3.9L7 7L13.2 3.9M7 7V14.2" fill="none" stroke="#c8c8c8" stroke-width="1.05" stroke-linejoin="round"/></svg>
<svg style="left:844.4px;top:373px" width="13.2" height="14.2" viewBox="0 0 14 15"><path d="M7 0.8L13.2 3.9V11.1L7 14.2L0.8 11.1V3.9Z M0.8 3.9L7 7L13.2 3.9M7 7V14.2" fill="none" stroke="#c8c8c8" stroke-width="1.05" stroke-linejoin="round"/></svg>
<svg style="left:844.4px;top:389px" width="13.2" height="14.2" viewBox="0 0 14 15"><path d="M7 0.8L13.2 3.9V11.1L7 14.2L0.8 11.1V3.9Z M0.8 3.9L7 7L13.2 3.9M7 7V14.2" fill="none" stroke="#c8c8c8" stroke-width="1.05" stroke-linejoin="round"/></svg>
<svg style="left:844.4px;top:405px" width="13.2" height="14.2" viewBox="0 0 14 15"><path d="M7 0.8L13.2 3.9V11.1L7 14.2L0.8 11.1V3.9Z M0.8 3.9L7 7L13.2 3.9M7 7V14.2" fill="none" stroke="#c8c8c8" stroke-width="1.05" stroke-linejoin="round"/></svg>
<svg style="left:844.4px;top:421px" width="13.2" height="14.2" viewBox="0 0 14 15"><path d="M7 0.8L13.2 3.9V11.1L7 14.2L0.8 11.1V3.9Z M0.8 3.9L7 7L13.2 3.9M7 7V14.2" fill="none" stroke="#c8c8c8" stroke-width="1.05" stroke-linejoin="round"/></svg>
<svg style="left:844.4px;top:437px" width="13.2" height="14.2" viewBox="0 0 14 15"><path d="M7 0.8L13.2 3.9V11.1L7 14.2L0.8 11.1V3.9Z M0.8 3.9L7 7L13.2 3.9M7 7V14.2" fill="none" stroke="#c8c8c8" stroke-width="1.05" stroke-linejoin="round"/></svg>
<svg style="left:844.4px;top:453px" width="13.2" height="14.2" viewBox="0 0 14 15"><path d="M7 0.8L13.2 3.9V11.1L7 14.2L0.8 11.1V3.9Z M0.8 3.9L7 7L13.2 3.9M7 7V14.2" fill="none" stroke="#c8c8c8" stroke-width="1.05" stroke-linejoin="round"/></svg>
<svg style="left:844.4px;top:469px" width="13.2" height="14.2" viewBox="0 0 14 15"><path d="M7 0.8L13.2 3.9V11.1L7 14.2L0.8 11.1V3.9Z M0.8 3.9L7 7L13.2 3.9M7 7V14.2" fill="none" stroke="#c8c8c8" stroke-width="1.05" stroke-linejoin="round"/></svg>
<svg style="left:844.4px;top:485px" width="13.2" height="14.2" viewBox="0 0 14 15"><path d="M7 0.8L13.2 3.9V11.1L7 14.2L0.8 11.1V3.9Z M0.8 3.9L7 7L13.2 3.9M7 7V14.2" fill="none" stroke="#c8c8c8" stroke-width="1.05" stroke-linejoin="round"/></svg>
<svg style="left:844.4px;top:501px" width="13.2" height="14.2" viewBox="0 0 14 15"><path d="M7 0.8L13.2 3.9V11.1L7 14.2L0.8 11.1V3.9Z M0.8 3.9L7 7L13.2 3.9M7 7V14.2" fill="none" stroke="#c8c8c8" stroke-width="1.05" stroke-linejoin="round"/></svg>
<svg style="left:818.0px;top:519.5px" width="8" height="9" viewBox="0 0 8 9"><path d="M0 0V9L8 4.5Z" fill="#6d6d6d"/></svg>
<svg style="left:829.8px;top:516.8px" width="13.2" height="14.2" viewBox="0 0 14 15"><path d="M7 0.5L13.5 3.7L7 7L0.5 3.7Z" fill="#8edcff"/><path d="M0.5 4.6L6.5 7.7V14.6L0.5 11.4Z" fill="#5fc6f2"/><path d="M13.5 4.6L7.5 7.7V14.6L13.5 11.4Z" fill="#6fd0f7"/></svg>
<div class="t u" style="left:847.5px;top:516px;color:#7fb0f5">Cl</div>
<svg style="left:1433px;top:519px" width="6" height="10" viewBox="0 0 6 10"><path d="M0.8 0.8L5 5L0.8 9.2" fill="none" stroke="#8a8a8a" stroke-width="1.2"/></svg>
<svg style="left:829.8px;top:532.8px" width="13.2" height="14.2" viewBox="0 0 14 15"><path d="M7 0.5L13.5 3.7L7 7L0.5 3.7Z" fill="#8edcff"/><path d="M0.5 4.6L6.5 7.7V14.6L0.5 11.4Z" fill="#5fc6f2"/><path d="M13.5 4.6L7.5 7.7V14.6L13.5 11.4Z" fill="#6fd0f7"/></svg>
<div class="t u" style="left:847.5px;top:532px;color:#7fb0f5">Cy</div>
<svg style="left:1433px;top:535px" width="6" height="10" viewBox="0 0 6 10"><path d="M0.8 0.8L5 5L0.8 9.2" fill="none" stroke="#8a8a8a" stroke-width="1.2"/></svg>
<svg style="left:829.9px;top:549px" width="13.2" height="14.2" viewBox="0 0 14 15"><path d="M7 0.8L13.2 3.9V11.1L7 14.2L0.8 11.1V3.9Z M0.8 3.9L7 7L13.2 3.9M7 7V14.2" fill="none" stroke="#c8c8c8" stroke-width="1.05" stroke-linejoin="round"/></svg>
<div class="t u" style="left:847.5px;top:548px;">Di</div>
<div class="a" style="left:769px;top:613px;width:675px;height:19px;background:#282828;"></div>
<div class="a" style="left:769px;top:613px;width:81px;height:20px;background:#3c3c3c;border-radius:3px 3px 0 0"></div>
<div class="a" style="left:769px;top:613px;width:81px;height:2px;background:#3a72b0;border-radius:3px 3px 0 0"></div>
<svg style="left:776.5px;top:618px" width="12" height="10" viewBox="0 0 12 10"><path d="M0 1.2Q0 0.2 1 0.2H4.6Q5.2 0.2 5.6 0.8L6.3 1.9H11Q12 1.9 12 2.9V9Q12 10 11 10H1Q0 10 0 9Z" fill="#c2c2c2"/></svg>
<div class="t " style="left:792.0px;top:616px;letter-spacing:0.717px;font-size:12px;">Project</div>
<svg style="left:1430px;top:617px" width="2" height="10" viewBox="0 0 2 10"><rect x="0" y="0" width="2" height="2" fill="#c4c4c4"/><rect x="0" y="4" width="2" height="2" fill="#c4c4c4"/><rect x="0" y="8" width="2" height="2" fill="#c4c4c4"/></svg>
<div class="a" style="left:769px;top:632px;width:675px;height:21px;background:#3c3c3c;"></div>
<svg style="left:776px;top:636px" width="25" height="13" viewBox="0 0 25 13"><path d="M6.2 0V12.4M0 6.2H12.4" stroke="#c4c4c4" stroke-width="1.7"/><path d="M16.7 4.2H23.7L20.2 8Z" fill="#c4c4c4"/></svg>
<svg style="left:1416px;top:636px" width="11" height="11" viewBox="0 0 11 11"><path d="M0.5 6Q5 1.5 9.5 6Q5 10.5 0.5 6Z" fill="none" stroke="#c4c4c4" stroke-width="1.1"/><path d="M1.5 10.5L9 0.5" stroke="#c4c4c4" stroke-width="1.2"/></svg>
<div class="t u" style="left:1427.5px;top:635px;color:#c4c4c4;font-size:11.5px">11</div>
<div class="a" style="left:769px;top:652px;width:675px;height:1px;background:#232323;"></div>
<div class="a" style="left:769px;top:653px;width:675px;height:315px;background:#383838;"></div>
<div class="a" style="left:769px;top:653px;width:675px;height:314px;overflow:hidden">
<svg style="left:4px;top:9px" width="9" height="8" viewBox="0 0 9 8"><path d="M0 0H9L4.5 8Z" fill="#6d6d6d"/></svg><svg style="left:18px;top:7px" width="14" height="10" viewBox="0 0 14 10"><path d="M0.55 9.4V1.1Q0.55 0.55 1.1 0.55H4.9L6 2.05H10.4Q10.95 2.05 10.95 2.6V4.2" fill="none" stroke="#c2c2c2" stroke-width="1.1"/><path d="M0.3 10L2.3 4.5H13.4L11.6 10Z" fill="#c2c2c2"/></svg><div class="t " style="left:35.2px;top:4px;letter-spacing:0.4px;font-size:12px;font-weight:bold;color:#d8d8d8">Assets</div><svg style="left:19px;top:24px" width="8" height="9" viewBox="0 0 8 9"><path d="M0 0V9L8 4.5Z" fill="#6d6d6d"/></svg><svg style="left:32px;top:23px" width="12" height="10" viewBox="0 0 12 10"><path d="M0 1.2Q0 0.2 1 0.2H4.6Q5.2 0.2 5.6 0.8L6.3 1.9H11Q12 1.9 12 2.9V9Q12 10 11 10H1Q0 10 0 9Z" fill="#c2c2c2"/></svg><div class="t " style="left:47.4px;top:20px;letter-spacing:0.6px;font-size:12px;">Lowpoly</div><div class="a" style="left:0px;top:36px;width:662px;height:16px;background:#2c5d87;"></div><svg style="left:32px;top:39px" width="12" height="10" viewBox="0 0 12 10"><path d="M0.55 1.2Q0.55 0.6 1.2 0.6H4.6L5.9 2.2H10.8Q11.45 2.2 11.45 2.9V8.8Q11.45 9.45 10.8 9.45H1.2Q0.55 9.45 0.55 8.8Z" fill="none" stroke="#e4e4e4" stroke-width="1.1"/><path d="M0.55 3.7H11.45" stroke="#e4e4e4" stroke-width="1"/></svg><div class="t " style="left:47.4px;top:36px;letter-spacing:0.538px;font-size:12px;color:#fff">Materials</div><svg style="left:19px;top:56px" width="8" height="9" viewBox="0 0 8 9"><path d="M0 0V9L8 4.5Z" fill="#6d6d6d"/></svg><svg style="left:32px;top:55px" width="12" height="10" viewBox="0 0 12 10"><path d="M0 1.2Q0 0.2 1 0.2H4.6Q5.2 0.2 5.6 0.8L6.3 1.9H11Q12 1.9 12 2.9V9Q12 10 11 10H1Q0 10 0 9Z" fill="#c2c2c2"/></svg><div class="t " style="left:47.4px;top:52px;letter-spacing:0.44px;font-size:12px;">Scenes</div><svg style="left:4px;top:73px" width="9" height="8" viewBox="0 0 9 8"><path d="M0 0H9L4.5 8Z" fill="#6d6d6d"/></svg><svg style="left:18px;top:71px" width="14" height="10" viewBox="0 0 14 10"><path d="M0.55 9.4V1.1Q0.55 0.55 1.1 0.55H4.9L6 2.05H10.4Q10.95 2.05 10.95 2.6V4.2" fill="none" stroke="#c2c2c2" stroke-width="1.1"/><path d="M0.3 10L2.3 4.5H13.4L11.6 10Z" fill="#c2c2c2"/></svg><div class="t " style="left:34.2px;top:68px;letter-spacing:0.414px;font-size:12px;font-weight:bold;color:#d8d8d8">Packages</div><svg style="left:19px;top:88px" width="8" height="9" viewBox="0 0 8 9"><path d="M0 0V9L8 4.5Z" fill="#6d6d6d"/></svg><svg style="left:32px;top:87px" width="12" height="10" viewBox="0 0 12 10"><path d="M0 1.2Q0 0.2 1 0.2H4.6Q5.2 0.2 5.6 0.8L6.3 1.9H11Q12 1.9 12 2.9V9Q12 10 11 10H1Q0 10 0 9Z" fill="#c2c2c2"/></svg><div class="t " style="left:47.4px;top:84px;letter-spacing:0.35px;font-size:12px;">Code Coverage</div><svg style="left:19px;top:104px" width="8" height="9" viewBox="0 0 8 9"><path d="M0 0V9L8 4.5Z" fill="#6d6d6d"/></svg><svg style="left:32px;top:103px" width="12" height="10" viewBox="0 0 12 10"><path d="M0 1.2Q0 0.2 1 0.2H4.6Q5.2 0.2 5.6 0.8L6.3 1.9H11Q12 1.9 12 2.9V9Q12 10 11 10H1Q0 10 0 9Z" fill="#c2c2c2"/></svg><div class="t " style="left:47.4px;top:100px;letter-spacing:0.3px;font-size:12px;">Custom NUnit</div><svg style="left:19px;top:120px" width="8" height="9" viewBox="0 0 8 9"><path d="M0 0V9L8 4.5Z" fill="#6d6d6d"/></svg><svg style="left:32px;top:119px" width="12" height="10" viewBox="0 0 12 10"><path d="M0 1.2Q0 0.2 1 0.2H4.6Q5.2 0.2 5.6 0.8L6.3 1.9H11Q12 1.9 12 2.9V9Q12 10 11 10H1Q0 10 0 9Z" fill="#c2c2c2"/></svg><div class="t " style="left:47.4px;top:116px;letter-spacing:0.281px;font-size:12px;">Editor Coroutines</div><svg style="left:19px;top:136px" width="8" height="9" viewBox="0 0 8 9"><path d="M0 0V9L8 4.5Z" fill="#6d6d6d"/></svg><svg style="left:32px;top:135px" width="12" height="10" viewBox="0 0 12 10"><path d="M0 1.2Q0 0.2 1 0.2H4.6Q5.2 0.2 5.6 0.8L6.3 1.9H11Q12 1.9 12 2.9V9Q12 10 11 10H1Q0 10 0 9Z" fill="#c2c2c2"/></svg><div class="t " style="left:48.4px;top:132px;letter-spacing:0.119px;font-size:12px;">JetBrains Rider Editor</div><svg style="left:19px;top:152px" width="8" height="9" viewBox="0 0 8 9"><path d="M0 0V9L8 4.5Z" fill="#6d6d6d"/></svg><svg style="left:32px;top:151px" width="12" height="10" viewBox="0 0 12 10"><path d="M0 1.2Q0 0.2 1 0.2H4.6Q5.2 0.2 5.6 0.8L6.3 1.9H11Q12 1.9 12 2.9V9Q12 10 11 10H1Q0 10 0 9Z" fill="#c2c2c2"/></svg><div class="t " style="left:47.4px;top:148px;letter-spacing:0.521px;font-size:12px;">Newtonsoft Json</div><svg style="left:19px;top:168px" width="8" height="9" viewBox="0 0 8 9"><path d="M0 0V9L8 4.5Z" fill="#6d6d6d"/></svg><svg style="left:32px;top:167px" width="12" height="10" viewBox="0 0 12 10"><path d="M0 1.2Q0 0.2 1 0.2H4.6Q5.2 0.2 5.6 0.8L6.3 1.9H11Q12 1.9 12 2.9V9Q12 10 11 10H1Q0 10 0 9Z" fill="#c2c2c2"/></svg><div class="t " style="left:47.4px;top:164px;letter-spacing:0.367px;font-size:12px;">Profile Analyzer</div><svg style="left:19px;top:184px" width="8" height="9" viewBox="0 0 8 9"><path d="M0 0V9L8 4.5Z" fill="#6d6d6d"/></svg><svg style="left:32px;top:183px" width="12" height="10" viewBox="0 0 12 10"><path d="M0 1.2Q0 0.2 1 0.2H4.6Q5.2 0.2 5.6 0.8L6.3 1.9H11Q12 1.9 12 2.9V9Q12 10 11 10H1Q0 10 0 9Z" fill="#c2c2c2"/></svg><div class="t " style="left:47.4px;top:180px;letter-spacing:0.358px;font-size:12px;">Services Core</div><svg style="left:19px;top:200px" width="8" height="9" viewBox="0 0 8 9"><path d="M0 0V9L8 4.5Z" fill="#6d6d6d"/></svg><svg style="left:32px;top:199px" width="12" height="10" viewBox="0 0 12 10"><path d="M0 1.2Q0 0.2 1 0.2H4.6Q5.2 0.2 5.6 0.8L6.3 1.9H11Q12 1.9 12 2.9V9Q12 10 11 10H1Q0 10 0 9Z" fill="#c2c2c2"/></svg><div class="t " style="left:47.4px;top:196px;letter-spacing:0.367px;font-size:12px;">Settings Manager</div><svg style="left:19px;top:216px" width="8" height="9" viewBox="0 0 8 9"><path d="M0 0V9L8 4.5Z" fill="#6d6d6d"/></svg><svg style="left:32px;top:215px" width="12" height="10" viewBox="0 0 12 10"><path d="M0 1.2Q0 0.2 1 0.2H4.6Q5.2 0.2 5.6 0.8L6.3 1.9H11Q12 1.9 12 2.9V9Q12 10 11 10H1Q0 10 0 9Z" fill="#c2c2c2"/></svg><div class="t " style="left:48.4px;top:212px;letter-spacing:0.362px;font-size:12px;">Test Framework</div><svg style="left:19px;top:232px" width="8" height="9" viewBox="0 0 8 9"><path d="M0 0V9L8 4.5Z" fill="#6d6d6d"/></svg><svg style="left:32px;top:231px" width="12" height="10" viewBox="0 0 12 10"><path d="M0 1.2Q0 0.2 1 0.2H4.6Q5.2 0.2 5.6 0.8L6.3 1.9H11Q12 1.9 12 2.9V9Q12 10 11 10H1Q0 10 0 9Z" fill="#c2c2c2"/></svg><div class="t " style="left:48.4px;top:228px;letter-spacing:0.44px;font-size:12px;">TextMeshPro</div><svg style="left:19px;top:248px" width="8" height="9" viewBox="0 0 8 9"><path d="M0 0V9L8 4.5Z" fill="#6d6d6d"/></svg><svg style="left:32px;top:247px" width="12" height="10" viewBox="0 0 12 10"><path d="M0 1.2Q0 0.2 1 0.2H4.6Q5.2 0.2 5.6 0.8L6.3 1.9H11Q12 1.9 12 2.9V9Q12 10 11 10H1Q0 10 0 9Z" fill="#c2c2c2"/></svg><div class="t " style="left:48.4px;top:244px;letter-spacing:0.271px;font-size:12px;">Timeline</div><svg style="left:19px;top:264px" width="8" height="9" viewBox="0 0 8 9"><path d="M0 0V9L8 4.5Z" fill="#6d6d6d"/></svg><svg style="left:32px;top:263px" width="12" height="10" viewBox="0 0 12 10"><path d="M0 1.2Q0 0.2 1 0.2H4.6Q5.2 0.2 5.6 0.8L6.3 1.9H11Q12 1.9 12 2.9V9Q12 10 11 10H1Q0 10 0 9Z" fill="#c2c2c2"/></svg><div class="t " style="left:47.4px;top:260px;letter-spacing:0.414px;font-size:12px;">Unity UI</div><svg style="left:19px;top:280px" width="8" height="9" viewBox="0 0 8 9"><path d="M0 0V9L8 4.5Z" fill="#6d6d6d"/></svg><svg style="left:32px;top:279px" width="12" height="10" viewBox="0 0 12 10"><path d="M0 1.2Q0 0.2 1 0.2H4.6Q5.2 0.2 5.6 0.8L6.3 1.9H11Q12 1.9 12 2.9V9Q12 10 11 10H1Q0 10 0 9Z" fill="#c2c2c2"/></svg><div class="t " style="left:48.4px;top:276px;letter-spacing:0.229px;font-size:12px;">Version Control</div><svg style="left:19px;top:296px" width="8" height="9" viewBox="0 0 8 9"><path d="M0 0V9L8 4.5Z" fill="#6d6d6d"/></svg><svg style="left:32px;top:295px" width="12" height="10" viewBox="0 0 12 10"><path d="M0 1.2Q0 0.2 1 0.2H4.6Q5.2 0.2 5.6 0.8L6.3 1.9H11Q12 1.9 12 2.9V9Q12 10 11 10H1Q0 10 0 9Z" fill="#c2c2c2"/></svg><div class="t " style="left:48.4px;top:292px;letter-spacing:0.293px;font-size:12px;">Visual Scripting</div><svg style="left:19px;top:312px" width="8" height="9" viewBox="0 0 8 9"><path d="M0 0V9L8 4.5Z" fill="#6d6d6d"/></svg><svg style="left:32px;top:311px" width="12" height="10" viewBox="0 0 12 10"><path d="M0 1.2Q0 0.2 1 0.2H4.6Q5.2 0.2 5.6 0.8L6.3 1.9H11Q12 1.9 12 2.9V9Q12 10 11 10H1Q0 10 0 9Z" fill="#c2c2c2"/></svg><div class="t " style="left:48.4px;top:308px;letter-spacing:0.146px;font-size:12px;">Visual Studio Code Editor</div>
</div>
<div class="a" style="left:1431px;top:653px;width:13px;height:315px;background:#353535;border-left:1px solid #2c2c2c"></div>
<svg style="left:1434px;top:658.5px" width="8" height="5" viewBox="0 0 8 5"><path d="M0 5H8L4 0Z" fill="#c4c4c4"/></svg>
<svg style="left:1434px;top:957.5px" width="8" height="5" viewBox="0 0 8 5"><path d="M0 0H8L4 5Z" fill="#c4c4c4"/></svg>
<div class="a" style="left:1433.5px;top:669px;width:9px;height:264px;background:#5f5f5f;border-radius:4.5px"></div>
<div class="a" style="left:769px;top:967px;width:675px;height:1px;background:#232323;"></div>
<div class="a" style="left:769px;top:968px;width:675px;height:21px;background:#3c3c3c;"></div>
<svg style="left:775.5px;top:974px" width="12" height="10" viewBox="0 0 12 10"><path d="M0 1.2Q0 0.2 1 0.2H4.6Q5.2 0.2 5.6 0.8L6.3 1.9H11Q12 1.9 12 2.9V9Q12 10 11 10H1Q0 10 0 9Z" fill="#c2c2c2"/></svg>
<div class="t " style="left:790.2px;top:971.5px;letter-spacing:0.3px;font-size:12px;">Assets/Materials</div>
<div class="a" style="left:1446px;top:44px;width:463px;height:19px;background:#282828;"></div>
<div class="a" style="left:1446px;top:44px;width:93px;height:20px;background:#3c3c3c;border-radius:3px 3px 0 0"></div>
<svg style="left:1455px;top:48px" width="10" height="10" viewBox="0 0 10 10"><circle cx="5" cy="5" r="5" fill="#c4c4c4"/><rect x="4.2" y="4.2" width="1.7" height="3.8" fill="#3c3c3c"/><rect x="4.2" y="1.9" width="1.7" height="1.6" fill="#3c3c3c"/></svg>
<div class="t " style="left:1469.4px;top:47px;letter-spacing:0.425px;font-size:12px;">Inspector</div>
<svg style="left:1874px;top:47.5px" width="10" height="11" viewBox="0 0 10 11"><path d="M7.2 5.6V3.3Q7.2 0.9 4.7 0.9Q2.6 0.9 1.9 2.4" fill="none" stroke="#c4c4c4" stroke-width="1.15"/><rect x="1" y="5.6" width="7.8" height="4.6" rx="0.7" fill="none" stroke="#c4c4c4" stroke-width="1.15"/></svg>
<svg style="left:1895px;top:48px" width="2" height="10" viewBox="0 0 2 10"><rect x="0" y="0" width="2" height="2" fill="#c4c4c4"/><rect x="0" y="4" width="2" height="2" fill="#c4c4c4"/><rect x="0" y="8" width="2" height="2" fill="#c4c4c4"/></svg>
<div class="a" style="left:1446px;top:63px;width:463px;height:54px;background:#3c3c3c;"></div>
<div class="a" style="left:1446px;top:117px;width:463px;height:1px;background:#1a1a1a;"></div>
<div class="a" style="left:1446px;top:118px;width:463px;height:849px;background:#383838;"></div>
<svg style="left:1456px;top:75px" width="24" height="20" viewBox="0 0 24 20"><path d="M0 1.6Q0 0 1.6 0H8.2L11 3.2H22.4Q24 3.2 24 4.8V18.4Q24 20 22.4 20H1.6Q0 20 0 18.4Z" fill="#c9c9c9"/></svg>
<div class="t" style="left:1492px;top:67.5px;font-size:13.5px;line-height:18px;height:18px;color:#bdbdbd;letter-spacing:0.35px">Materials (Default Asset)</div>
<svg style="left:1901px;top:71px" width="2" height="10" viewBox="0 0 2 10"><rect x="0" y="0" width="2" height="2" fill="#c4c4c4"/><rect x="0" y="4" width="2" height="2" fill="#c4c4c4"/><rect x="0" y="8" width="2" height="2" fill="#c4c4c4"/></svg>
<div class="a" style="left:1863px;top:92px;width:42px;height:16px;background:#585858;border-radius:3px;border:1px solid #303030"></div>
<div class="t " style="left:1869.3px;top:92px;letter-spacing:0.2px;font-size:12px;color:#e4e4e4">Open</div>
<div class="a" style="left:1446px;top:967px;width:463px;height:1px;background:#232323;"></div>
<div class="a" style="left:1446px;top:968px;width:463px;height:21px;background:#3c3c3c;"></div>
<div class="t " style="left:1453.7px;top:970.5px;letter-spacing:0.127px;font-size:12px;font-weight:bold;color:#c4c4c4">Asset Labels</div>
<div class="a" style="left:859px;top:164px;width:312px;height:531px;background:#f2f2f2;border:1px solid #f9f9f9;box-shadow:0 0 0 1px rgba(0,0,0,.18);overflow:hidden">
<div class="a" style="left:0;top:0;width:33px;height:531px;background:#f0f0f0"></div>
<div class="a" style="left:2px;top:2px;width:306px;height:22px;background:#91c9f7"></div>
<div class="mi" style="left:33.20px;top:2px;letter-spacing:-0.2px">Create</div>
<svg style="left:297.0px;top:7.9px" width="5" height="9" viewBox="0 0 5 9"><path d="M0.6 0.6L4.4 4.5L0.6 8.4" fill="none" stroke="#1a1a1a" stroke-width="1.1"/></svg>
<div class="mi" style="left:33.20px;top:24px;letter-spacing:-0.153px">Show in Explorer</div>
<div class="mi" style="left:34.20px;top:46px;letter-spacing:-0.133px">Open</div>
<div class="mi" style="left:33.20px;top:68px;letter-spacing:0.02px">Delete</div>
<div class="mi" style="left:33.20px;top:90px;letter-spacing:-0.18px">Rename</div>
<div class="mi" style="left:33.20px;top:112px;letter-spacing:0.075px">Copy Path</div>
<div class="mi" style="left:235.20px;top:112px;letter-spacing:0.322px">Alt+Ctrl+C</div>
<div class="sep" style="left:30px;top:137px;width:279px"></div>
<div class="mi d" style="left:34.20px;top:141px;letter-spacing:-0.111px">Open Scene Additive</div>
<div class="sep" style="left:30px;top:166px;width:279px"></div>
<div class="mi d" style="left:34.20px;top:170px;letter-spacing:-0.195px">View in Package Manager</div>
<div class="sep" style="left:30px;top:195px;width:279px"></div>
<div class="mi" style="left:33.20px;top:199px;letter-spacing:0.017px">Import New Asset...</div>
<div class="mi" style="left:33.20px;top:221px;letter-spacing:-0.015px">Import Package</div>
<svg style="left:297.0px;top:226.9px" width="5" height="9" viewBox="0 0 5 9"><path d="M0.6 0.6L4.4 4.5L0.6 8.4" fill="none" stroke="#1a1a1a" stroke-width="1.1"/></svg>
<div class="mi" style="left:33.20px;top:243px;letter-spacing:-0.238px">Export Package...</div>
<div class="mi d" style="left:33.20px;top:265px;letter-spacing:-0.304px">Find References In Scene</div>
<div class="mi" style="left:33.20px;top:287px;letter-spacing:-0.256px">Select Dependencies</div>
<div class="sep" style="left:30px;top:312px;width:279px"></div>
<div class="mi" style="left:33.20px;top:316px;letter-spacing:-0.233px">Refresh</div>
<div class="mi" style="left:258.40px;top:316px;letter-spacing:0.14px">Ctrl+R</div>
<div class="mi" style="left:33.20px;top:338px;letter-spacing:0.129px">Reimport</div>
<div class="sep" style="left:30px;top:363px;width:279px"></div>
<div class="mi" style="left:33.20px;top:367px;letter-spacing:0.255px">Reimport All</div>
<div class="sep" style="left:30px;top:392px;width:279px"></div>
<div class="mi d" style="left:33.20px;top:396px;letter-spacing:-0.144px">Extract From Prefab</div>
<div class="sep" style="left:30px;top:421px;width:279px"></div>
<div class="mi" style="left:33.20px;top:425px;letter-spacing:-0.2px">Update UXML Schema</div>
<div class="sep" style="left:30px;top:450px;width:279px"></div>
<div class="mi" style="left:34.20px;top:454px;letter-spacing:-0.15px">Open C&#35; Project</div>
<div class="mi" style="left:34.20px;top:476px;letter-spacing:0.128px">View in Import Activity Window</div>
<div class="sep" style="left:30px;top:501px;width:279px"></div>
<div class="mi" style="left:33.20px;top:505px;letter-spacing:-0.117px">Properties...</div>
<div class="mi" style="left:263.20px;top:505px;letter-spacing:0.2px">Alt+P</div>
</div>
<div class="a" style="left:1168px;top:110px;width:251px;height:890px;background:#f2f2f2;border:1px solid #f9f9f9;box-shadow:0 0 0 1px rgba(0,0,0,.18);overflow:hidden">
<div class="a" style="left:0;top:0;width:32px;height:890px;background:#f0f0f0"></div>
<div class="mi" style="left:33.30px;top:2px;letter-spacing:-0.04px">Folder</div>
<div class="sep" style="left:30px;top:27px;width:217px"></div>
<div class="mi" style="left:33.30px;top:31px;letter-spacing:-0.075px">C&#35; Script</div>
<div class="mi" style="left:33.30px;top:53px;letter-spacing:-0.6px">2D</div>
<svg style="left:233.0px;top:58.9px" width="5" height="9" viewBox="0 0 5 9"><path d="M0.6 0.6L4.4 4.5L0.6 8.4" fill="none" stroke="#1a1a1a" stroke-width="1.1"/></svg>
<div class="mi" style="left:34.30px;top:75px;letter-spacing:-0.127px">Visual Scripting</div>
<svg style="left:233.0px;top:80.9px" width="5" height="9" viewBox="0 0 5 9"><path d="M0.6 0.6L4.4 4.5L0.6 8.4" fill="none" stroke="#1a1a1a" stroke-width="1.1"/></svg>
<div class="mi" style="left:33.30px;top:97px;letter-spacing:-0.4px">Shader</div>
<svg style="left:233.0px;top:102.9px" width="5" height="9" viewBox="0 0 5 9"><path d="M0.6 0.6L4.4 4.5L0.6 8.4" fill="none" stroke="#1a1a1a" stroke-width="1.1"/></svg>
<div class="mi" style="left:33.30px;top:119px;letter-spacing:-0.113px">Shader Variant Collection</div>
<div class="mi" style="left:34.30px;top:141px;letter-spacing:-0.1px">Testing</div>
<svg style="left:233.0px;top:146.9px" width="5" height="9" viewBox="0 0 5 9"><path d="M0.6 0.6L4.4 4.5L0.6 8.4" fill="none" stroke="#1a1a1a" stroke-width="1.1"/></svg>
<div class="mi" style="left:33.30px;top:163px;letter-spacing:-0.3px">Playables</div>
<svg style="left:233.0px;top:168.9px" width="5" height="9" viewBox="0 0 5 9"><path d="M0.6 0.6L4.4 4.5L0.6 8.4" fill="none" stroke="#1a1a1a" stroke-width="1.1"/></svg>
<div class="mi" style="left:34.30px;top:185px;letter-spacing:0.033px">Assembly Definition</div>
<div class="mi" style="left:34.30px;top:207px;letter-spacing:-0.118px">Assembly Definition Reference</div>
<div class="sep" style="left:30px;top:232px;width:217px"></div>
<div class="mi" style="left:34.30px;top:236px;letter-spacing:-0.433px">Text</div>
<svg style="left:233.0px;top:241.9px" width="5" height="9" viewBox="0 0 5 9"><path d="M0.6 0.6L4.4 4.5L0.6 8.4" fill="none" stroke="#1a1a1a" stroke-width="1.1"/></svg>
<div class="mi" style="left:34.30px;top:258px;letter-spacing:-0.27px">TextMeshPro</div>
<svg style="left:233.0px;top:263.9px" width="5" height="9" viewBox="0 0 5 9"><path d="M0.6 0.6L4.4 4.5L0.6 8.4" fill="none" stroke="#1a1a1a" stroke-width="1.1"/></svg>
<div class="sep" style="left:30px;top:283px;width:217px"></div>
<div class="mi" style="left:33.30px;top:287px;letter-spacing:-0.525px">Scene</div>
<div class="mi" style="left:33.30px;top:309px;letter-spacing:-0.246px">Scene Template</div>
<div class="mi d" style="left:33.30px;top:331px;letter-spacing:-0.254px">Scene Template From Scene</div>
<div class="mi" style="left:33.30px;top:353px;letter-spacing:-0.182px">Scene Template Pipeline</div>
<div class="mi" style="left:33.30px;top:375px;letter-spacing:-0.14px">Prefab</div>
<div class="mi d" style="left:33.30px;top:397px;letter-spacing:-0.185px">Prefab Variant</div>
<div class="sep" style="left:30px;top:422px;width:217px"></div>
<div class="mi" style="left:34.30px;top:426px;letter-spacing:0.18px">Audio Mixer</div>
<div class="sep" style="left:30px;top:451px;width:217px"></div>
<div class="a" style="left:2px;top:455px;width:245px;height:22px;background:#91c9f7"></div>
<div class="mi" style="left:33.30px;top:455px;letter-spacing:0.214px">Material</div>
<div class="mi" style="left:33.30px;top:477px;letter-spacing:-0.367px">Lens Flare</div>
<div class="mi" style="left:33.30px;top:499px;letter-spacing:-0.254px">Render Texture</div>
<div class="mi" style="left:33.30px;top:521px;letter-spacing:-0.006px">Lightmap Parameters</div>
<div class="mi" style="left:33.30px;top:543px;letter-spacing:0.1px">Lighting Settings</div>
<div class="mi" style="left:33.30px;top:565px;letter-spacing:-0.12px">Custom Render Texture</div>
<div class="sep" style="left:30px;top:590px;width:217px"></div>
<div class="mi" style="left:34.30px;top:594px;letter-spacing:0.1px">Animator Controller</div>
<div class="mi" style="left:34.30px;top:616px;letter-spacing:0.3px">Animation</div>
<div class="mi" style="left:34.30px;top:638px;letter-spacing:0.022px">Animator Override Controller</div>
<div class="mi" style="left:34.30px;top:660px;letter-spacing:-0.12px">Avatar Mask</div>
<div class="sep" style="left:30px;top:685px;width:217px"></div>
<div class="mi" style="left:34.30px;top:689px;letter-spacing:-0.014px">Timeline</div>
<div class="mi" style="left:33.30px;top:711px;letter-spacing:-0.08px">Signal</div>
<div class="sep" style="left:30px;top:736px;width:217px"></div>
<div class="mi" style="left:33.30px;top:740px;letter-spacing:-0.021px">Physic Material</div>
<div class="sep" style="left:30px;top:765px;width:217px"></div>
<div class="mi" style="left:33.30px;top:769px;letter-spacing:-0.343px">GUI Skin</div>
<div class="mi" style="left:33.30px;top:791px;letter-spacing:0.06px">Custom Font</div>
<div class="sep" style="left:30px;top:816px;width:217px"></div>
<div class="mi" style="left:33.30px;top:820px;letter-spacing:-0.26px">Legacy</div>
<svg style="left:233.0px;top:825.9px" width="5" height="9" viewBox="0 0 5 9"><path d="M0.6 0.6L4.4 4.5L0.6 8.4" fill="none" stroke="#1a1a1a" stroke-width="1.1"/></svg>
<div class="mi" style="left:33.30px;top:842px;letter-spacing:0.078px">UI Toolkit</div>
<svg style="left:233.0px;top:847.9px" width="5" height="9" viewBox="0 0 5 9"><path d="M0.6 0.6L4.4 4.5L0.6 8.4" fill="none" stroke="#1a1a1a" stroke-width="1.1"/></svg>
<div class="sep" style="left:30px;top:867px;width:217px"></div>
<div class="mi" style="left:33.30px;top:871px;letter-spacing:-0.16px">Search</div>
<svg style="left:233.0px;top:876.9px" width="5" height="9" viewBox="0 0 5 9"><path d="M0.6 0.6L4.4 4.5L0.6 8.4" fill="none" stroke="#1a1a1a" stroke-width="1.1"/></svg>
</div>
</div></body></html>
